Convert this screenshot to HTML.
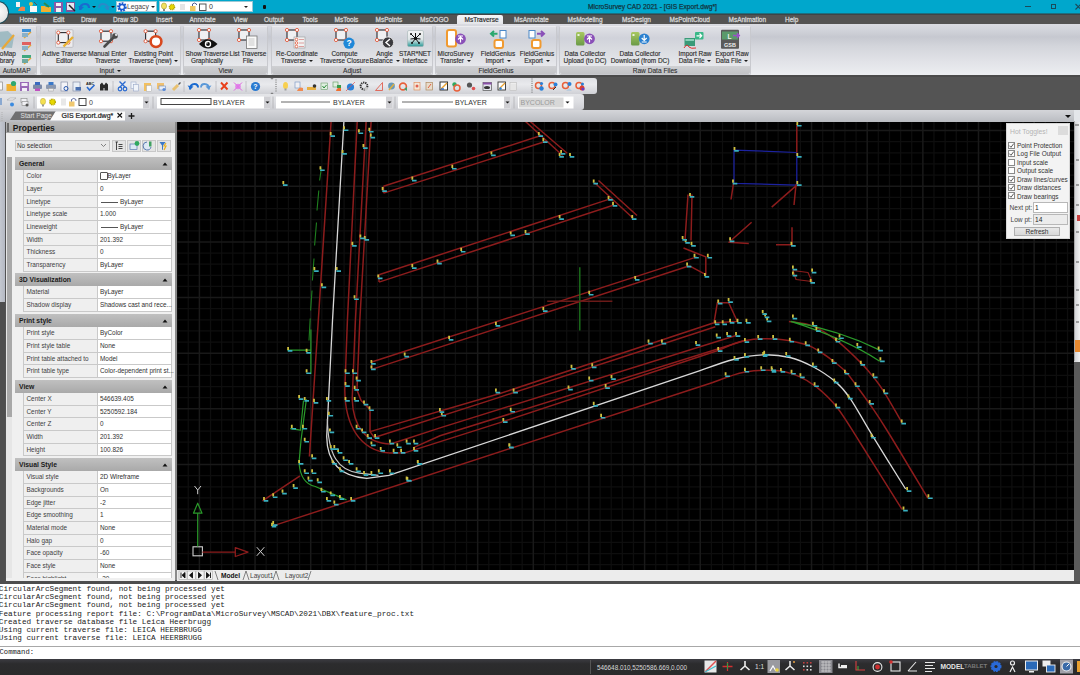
<!DOCTYPE html>
<html><head><meta charset="utf-8">
<style>
*{margin:0;padding:0;box-sizing:border-box}
html,body{width:1080px;height:675px;overflow:hidden;background:#555;font-family:"Liberation Sans",sans-serif;position:relative}
.a{position:absolute}
.t{position:absolute;white-space:nowrap}
.dd{display:inline-block;width:0;height:0;border-left:2.2px solid transparent;border-right:2.2px solid transparent;border-top:2.8px solid #1a1a1a;vertical-align:1px;margin-left:1px}

</style></head><body>
<div class="a" style="left:0;top:0;width:1080px;height:14px;background:#00a7cc"></div>
<div class="a" style="left:0;top:13px;width:1080px;height:1px;background:#1d6f80"></div>
<!-- app button -->

<!-- quick access icons -->
<svg class="a" style="left:14px;top:1px" width="105" height="12" viewBox="0 0 105 12">
 <rect x="2" y="1" width="4" height="5" fill="#f4f4f4"/><path d="M4 10 Q6 4 11 6 L11 10 Z" fill="#f0834a"/>
 <circle cx="17" cy="3" r="2" fill="#e8c040"/><rect x="16" y="5" width="7" height="6" fill="#fafafa"/><path d="M20 1 l3 3" stroke="#555" stroke-width="1"/>
 <path d="M27 5 h4 l1 1 h5 v5 h-10z" fill="#f0b030"/><path d="M30 2 l5 4" stroke="#2a8a50" stroke-width="2"/>
 <rect x="40" y="1" width="9" height="10" fill="#8a5aa8"/><rect x="42" y="2" width="5" height="3" fill="#f2f2f2"/><rect x="42" y="7" width="5" height="4" fill="#f2f2f2"/>
 <rect x="52" y="1" width="9" height="10" fill="#7a5a9a"/><rect x="53" y="2" width="7" height="7" fill="#e6e6ee"/><path d="M55 4 l6 6" stroke="#222" stroke-width="1.5"/>
 <path d="M66 9 q0 -6 5 -6 q4 0 4 4" stroke="#1a6ad0" stroke-width="2.2" fill="none"/><path d="M64 5 l3 4 l3 -3z" fill="#1a6ad0"/>
 <path d="M78 5 l2 2 l2 -2z" fill="#111"/>
 <path d="M94 9 q0 -6 -5 -6 q-4 0 -4 4" stroke="#2a8ac8" stroke-width="2" fill="none"/><path d="M96 5 l-3 4 l-3 -3z" fill="#2a8ac8"/>
 <path d="M97 5 l2 2 l2 -2z" fill="#111"/>
</svg>
<!-- Legacy combo -->
<div class="a" style="left:116px;top:1px;width:41px;height:11px;background:#fff;border:1px solid #9cc8d4"></div>
<svg class="a" style="left:117px;top:2px" width="10" height="10" viewBox="0 0 10 10"><circle cx="5" cy="5" r="3.6" fill="none" stroke="#1a5ad0" stroke-width="2.4" stroke-dasharray="1.7 1"/><circle cx="5" cy="5" r="2.6" fill="none" stroke="#1a5ad0" stroke-width="1.5"/></svg>
<div class="t" style="left:127px;top:1.5px;font-size:6.8px;line-height:10px;color:#444">Legacy</div>
<div class="a" style="left:151px;top:6px;width:0;height:0;border-left:2px solid transparent;border-right:2px solid transparent;border-top:2.5px solid #222"></div>
<!-- layer combo -->
<div class="a" style="left:159px;top:1px;width:94px;height:11px;background:#fff;border:1px solid #9cc8d4"></div>
<svg class="a" style="left:160px;top:2px" width="50" height="10" viewBox="0 0 50 10">
 <ellipse cx="4" cy="4" rx="2.6" ry="3" fill="#f2e060" stroke="#a8a030" stroke-width="0.6"/><rect x="3" y="7" width="2" height="2" fill="#888"/>
 <circle cx="12" cy="5" r="2.6" fill="#e8d800" stroke="#b0a000" stroke-width="1.4" stroke-dasharray="1 0.6"/>
 <rect x="20" y="2" width="5" height="6" fill="#e4e4e4"/>
 <rect x="30" y="4" width="5.5" height="5" fill="#f0c860"/><path d="M32.5 4 v-2 q2 -2 4 0 v1" stroke="#2a3a7a" fill="none" stroke-width="0.8"/>
 <rect x="39.5" y="2" width="6.5" height="6.5" fill="#fff" stroke="#444" stroke-width="0.9"/>
</svg>
<div class="t" style="left:209px;top:1.5px;font-size:7px;line-height:10px;color:#333">0</div>
<div class="a" style="left:244px;top:6px;width:0;height:0;border-left:2px solid transparent;border-right:2px solid transparent;border-top:2.5px solid #222"></div>
<div class="a" style="left:263px;top:5px;width:3px;height:4px;border-radius:1px;background:#111"></div>
<div class="t" style="left:588px;top:2px;font-size:6.9px;line-height:9px;color:#123642;-webkit-text-stroke:0.25px #123642;transform:scaleX(0.97);transform-origin:left">MicroSurvey CAD 2021 - [GIS Export.dwg*]</div>
<div class="a" style="left:1025px;top:6px;width:6px;height:1.2px;background:#1a4a5a"></div>
<div class="a" style="left:1051px;top:4px;width:5px;height:5px;border:1.2px solid #1a4a5a"></div>
<svg class="a" style="left:1074px;top:3px" width="6" height="8"><path d="M1.5 1 L7 6.5 M7 1 L1.5 6.5" stroke="#1a4a5a" stroke-width="1.1"/></svg>
<div class="a" style="left:0;top:14px;width:1080px;height:10px;background:#545352"></div>
<div class="a" style="left:0;top:14px;width:1080px;height:1px;background:#3e4446"></div>
<div class="a" style="left:457px;top:15px;width:46px;height:10px;background:linear-gradient(#f4f5f7,#e2e3e7);border-radius:2px 2px 0 0"></div>
<div class="a" style="left:-15px;top:0.5px;width:24px;height:23.5px;border-radius:50%;background:#1a4a58"></div>
<div class="a" style="left:-13px;top:2px;width:20.5px;height:20.5px;border-radius:50%;background:radial-gradient(circle at 55% 45%,#fbfbfb,#e6e6e6 55%,#c4c4c4)"></div>
<div style="position:absolute;left:0;top:15px;font-size:6.5px;font-weight:normal;-webkit-text-stroke:0.3px #d0d0d0;color:#d6d6d6;line-height:10px">
<span class="t" style="left:19.5px">Home</span>
<span class="t" style="left:53px">Edit</span>
<span class="t" style="left:81px">Draw</span>
<span class="t" style="left:113px">Draw 3D</span>
<span class="t" style="left:156px">Insert</span>
<span class="t" style="left:189.5px">Annotate</span>
<span class="t" style="left:233.5px">View</span>
<span class="t" style="left:264px">Output</span>
<span class="t" style="left:302.5px">Tools</span>
<span class="t" style="left:334.5px">MsTools</span>
<span class="t" style="left:375.5px">MsPoints</span>
<span class="t" style="left:420px">MsCOGO</span>
<span class="t" style="left:464.5px;color:#2a2a2a;-webkit-text-stroke:0.2px #333">MsTraverse</span>
<span class="t" style="left:514px">MsAnnotate</span>
<span class="t" style="left:567.5px">MsModeling</span>
<span class="t" style="left:622px">MsDesign</span>
<span class="t" style="left:669.5px">MsPointCloud</span>
<span class="t" style="left:728.5px">MsAnimation</span>
<span class="t" style="left:785px">Help</span>
</div>
<div class="a" style="left:0;top:24px;width:1080px;height:51px;background:linear-gradient(#dadbe1 0px,#d0d2d9 7px,#c6c8d0 13px,#d3d5db 22px,#e2e3e8 38px,#eceef1 51px)"></div>
<div class="a" style="left:0;top:75px;width:1080px;height:2px;background:#4a4a4a"></div>
<div class="a" style="left:-4px;top:25.5px;width:41.3px;height:49px;border-radius:2px;background:linear-gradient(#e0e1e6,#d0d2da 11px,#d9dbe0 22px,#e6e7eb 38px);border:1px solid #c8c9ce;border-top-color:#ececef"></div>
<div class="a" style="left:-3px;top:66px;width:39.3px;height:8px;background:linear-gradient(#cfd0d3,#c2c3c6);border-radius:0 0 2px 2px"></div>
<div class="t" style="left:-4px;width:41.3px;top:66.6px;font-size:6.6px;line-height:8px;text-align:center;color:#2a2a2a;-webkit-text-stroke:0.1px #444">AutoMAP</div>
<div class="a" style="left:39.5px;top:25.5px;width:141.5px;height:49px;border-radius:2px;background:linear-gradient(#e0e1e6,#d0d2da 11px,#d9dbe0 22px,#e6e7eb 38px);border:1px solid #c8c9ce;border-top-color:#ececef"></div>
<div class="a" style="left:40.5px;top:66px;width:139.5px;height:8px;background:linear-gradient(#cfd0d3,#c2c3c6);border-radius:0 0 2px 2px"></div>
<div class="t" style="left:39.5px;width:141.5px;top:66.6px;font-size:6.6px;line-height:8px;text-align:center;color:#2a2a2a;-webkit-text-stroke:0.1px #444">Input <i class="dd"></i></div>
<div class="a" style="left:183px;top:25.5px;width:85px;height:49px;border-radius:2px;background:linear-gradient(#e0e1e6,#d0d2da 11px,#d9dbe0 22px,#e6e7eb 38px);border:1px solid #c8c9ce;border-top-color:#ececef"></div>
<div class="a" style="left:184px;top:66px;width:83px;height:8px;background:linear-gradient(#cfd0d3,#c2c3c6);border-radius:0 0 2px 2px"></div>
<div class="t" style="left:183px;width:85px;top:66.6px;font-size:6.6px;line-height:8px;text-align:center;color:#2a2a2a;-webkit-text-stroke:0.1px #444">View</div>
<div class="a" style="left:271px;top:25.5px;width:162.3px;height:49px;border-radius:2px;background:linear-gradient(#e0e1e6,#d0d2da 11px,#d9dbe0 22px,#e6e7eb 38px);border:1px solid #c8c9ce;border-top-color:#ececef"></div>
<div class="a" style="left:272px;top:66px;width:160.3px;height:8px;background:linear-gradient(#cfd0d3,#c2c3c6);border-radius:0 0 2px 2px"></div>
<div class="t" style="left:271px;width:162.3px;top:66.6px;font-size:6.6px;line-height:8px;text-align:center;color:#2a2a2a;-webkit-text-stroke:0.1px #444">Adjust</div>
<div class="a" style="left:435px;top:25.5px;width:122px;height:49px;border-radius:2px;background:linear-gradient(#e0e1e6,#d0d2da 11px,#d9dbe0 22px,#e6e7eb 38px);border:1px solid #c8c9ce;border-top-color:#ececef"></div>
<div class="a" style="left:436px;top:66px;width:120px;height:8px;background:linear-gradient(#cfd0d3,#c2c3c6);border-radius:0 0 2px 2px"></div>
<div class="t" style="left:435px;width:122px;top:66.6px;font-size:6.6px;line-height:8px;text-align:center;color:#2a2a2a;-webkit-text-stroke:0.1px #444">FieldGenius</div>
<div class="a" style="left:559px;top:25.5px;width:192px;height:49px;border-radius:2px;background:linear-gradient(#e0e1e6,#d0d2da 11px,#d9dbe0 22px,#e6e7eb 38px);border:1px solid #c8c9ce;border-top-color:#ececef"></div>
<div class="a" style="left:560px;top:66px;width:190px;height:8px;background:linear-gradient(#cfd0d3,#c2c3c6);border-radius:0 0 2px 2px"></div>
<div class="t" style="left:559px;width:192px;top:66.6px;font-size:6.6px;line-height:8px;text-align:center;color:#2a2a2a;-webkit-text-stroke:0.1px #444">Raw Data Files</div>
<div class="t" style="left:-43px;width:100px;top:49.7px;font-size:6.45px;line-height:7.7px;text-align:center;color:#262626;-webkit-text-stroke:0.15px #444">toMap<br>brary</div>
<div class="t" style="left:14.299999999999997px;width:100px;top:49.7px;font-size:6.45px;line-height:7.7px;text-align:center;color:#262626;-webkit-text-stroke:0.15px #444">Active Traverse<br>Editor</div>
<div class="t" style="left:57.5px;width:100px;top:49.7px;font-size:6.45px;line-height:7.7px;text-align:center;color:#262626;-webkit-text-stroke:0.15px #444">Manual Enter<br>Traverse</div>
<div class="t" style="left:103.5px;width:100px;top:49.7px;font-size:6.45px;line-height:7.7px;text-align:center;color:#262626;-webkit-text-stroke:0.15px #444">Existing Point<br>Traverse (new) <i class="dd"></i></div>
<div class="t" style="left:157px;width:100px;top:49.7px;font-size:6.45px;line-height:7.7px;text-align:center;color:#262626;-webkit-text-stroke:0.15px #444">Show Traverse<br>Graphically</div>
<div class="t" style="left:198px;width:100px;top:49.7px;font-size:6.45px;line-height:7.7px;text-align:center;color:#262626;-webkit-text-stroke:0.15px #444">List Traverse<br>File</div>
<div class="t" style="left:247px;width:100px;top:49.7px;font-size:6.45px;line-height:7.7px;text-align:center;color:#262626;-webkit-text-stroke:0.15px #444">Re-Coordinate<br>Traverse <i class="dd"></i></div>
<div class="t" style="left:294.5px;width:100px;top:49.7px;font-size:6.45px;line-height:7.7px;text-align:center;color:#262626;-webkit-text-stroke:0.15px #444">Compute<br>Traverse Closure</div>
<div class="t" style="left:334.5px;width:100px;top:49.7px;font-size:6.45px;line-height:7.7px;text-align:center;color:#262626;-webkit-text-stroke:0.15px #444">Angle<br>Balance <i class="dd"></i></div>
<div class="t" style="left:365px;width:100px;top:49.7px;font-size:6.45px;line-height:7.7px;text-align:center;color:#262626;-webkit-text-stroke:0.15px #444">STAR*NET<br>Interface</div>
<div class="t" style="left:405.5px;width:100px;top:49.7px;font-size:6.45px;line-height:7.7px;text-align:center;color:#262626;-webkit-text-stroke:0.15px #444">MicroSurvey<br>Transfer <i class="dd"></i></div>
<div class="t" style="left:448px;width:100px;top:49.7px;font-size:6.45px;line-height:7.7px;text-align:center;color:#262626;-webkit-text-stroke:0.15px #444">FieldGenius<br>Import <i class="dd"></i></div>
<div class="t" style="left:487px;width:100px;top:49.7px;font-size:6.45px;line-height:7.7px;text-align:center;color:#262626;-webkit-text-stroke:0.15px #444">FieldGenius<br>Export <i class="dd"></i></div>
<div class="t" style="left:535px;width:100px;top:49.7px;font-size:6.45px;line-height:7.7px;text-align:center;color:#262626;-webkit-text-stroke:0.15px #444">Data Collector<br>Upload (to DC)</div>
<div class="t" style="left:590px;width:100px;top:49.7px;font-size:6.45px;line-height:7.7px;text-align:center;color:#262626;-webkit-text-stroke:0.15px #444">Data Collector<br>Download (from DC)</div>
<div class="t" style="left:645px;width:100px;top:49.7px;font-size:6.45px;line-height:7.7px;text-align:center;color:#262626;-webkit-text-stroke:0.15px #444">Import Raw<br>Data File <i class="dd"></i></div>
<div class="t" style="left:682px;width:100px;top:49.7px;font-size:6.45px;line-height:7.7px;text-align:center;color:#262626;-webkit-text-stroke:0.15px #444">Export Raw<br>Data File <i class="dd"></i></div><svg class="a" style="left:0;top:1px" width="1080" height="77" viewBox="0 0 1080 77">
<defs>
 <g id="trv">
  <rect x="0" y="0" width="10" height="10" fill="#f0f0f2" stroke="#2a2a30" stroke-width="1.1"/>
  <circle cx="0" cy="0" r="1.6" fill="#fff" stroke="#e0583a" stroke-width="0.9"/>
  <circle cx="10" cy="0" r="1.6" fill="#fff" stroke="#e0583a" stroke-width="0.9"/>
  <circle cx="0" cy="10" r="1.6" fill="#fff" stroke="#e0583a" stroke-width="0.9"/>
  <circle cx="10" cy="10" r="1.6" fill="#fff" stroke="#e0583a" stroke-width="0.9"/>
 </g>
</defs>
<!-- AutoMap library -->
<path d="M-2 31 L8 30 L14 36 L12 47 L-2 46 Z" fill="#9ab8c0" opacity="0.9"/>
<path d="M2 48 L14 34" stroke="#e8a838" stroke-width="2.2"/>
<rect x="22" y="28" width="9" height="3" fill="#3a90d8"/><path d="M24 37 L31 31" stroke="#e0a840" stroke-width="1.6"/><rect x="22" y="32" width="6" height="4" fill="#8ab0c8"/>
<rect x="22" y="41" width="9" height="3" fill="#e06060"/><path d="M24 50 L31 44" stroke="#e0a840" stroke-width="1.6"/><rect x="22" y="45" width="6" height="4" fill="#8ab0c8"/>
<rect x="22" y="54" width="9" height="3" fill="#40a880"/><path d="M24 63 L31 57" stroke="#e0a840" stroke-width="1.6"/><rect x="22" y="58" width="6" height="4" fill="#70a8a0"/>
<!-- Active traverse editor -->
<rect x="55.5" y="28.7" width="17.5" height="17.7" fill="#ececee" stroke="#b8b8bc" stroke-width="0.8" rx="1"/>
<use href="#trv" x="58.3" y="31.6"/>
<path d="M63.5 45.5 L73 36" stroke="#e8b030" stroke-width="2.4"/>
<!-- Manual enter -->
<use href="#trv" x="101" y="30.2"/>
<path d="M104.5 45.5 L114 36" stroke="#4a4a4a" stroke-width="2.6" stroke-linecap="round"/>
<circle cx="115" cy="35" r="2.8" fill="#4a4a4a"/><circle cx="116.2" cy="33.8" r="1.3" fill="#dcdde2"/>
<!-- existing point -->
<use href="#trv" x="145.6" y="30.2"/>
<circle cx="156" cy="40.6" r="5.4" fill="#fff" stroke="#d8481e" stroke-width="2.6"/>
<!-- show traverse graphically -->
<use href="#trv" x="199" y="29"/>
<path d="M199 43 Q208 33.5 217.5 43 Q208 52 199 43Z" fill="#111"/>
<circle cx="208" cy="43" r="3.2" fill="#fff"/><circle cx="208" cy="43" r="1.9" fill="#111"/><circle cx="207" cy="42" r="0.7" fill="#fff"/>
<!-- list traverse file -->
<use href="#trv" x="239" y="29"/>
<rect x="246.5" y="35" width="10.5" height="12.5" fill="#fafafa" stroke="#777" stroke-width="0.8"/>
<path d="M248.5 38h6M248.5 40h6M248.5 42h6M248.5 44h6" stroke="#aaa" stroke-width="0.6"/>
<!-- re-coordinate -->
<use href="#trv" x="287" y="29"/>
<rect x="294" y="36" width="11" height="11" fill="#f2f2f2" stroke="#999" stroke-width="0.6"/>
<circle cx="296.5" cy="38.5" r="1.3" fill="#fff" stroke="#e0583a" stroke-width="0.8"/><circle cx="296.5" cy="42" r="1.3" fill="#fff" stroke="#e0583a" stroke-width="0.8"/><circle cx="296.5" cy="45.5" r="1.3" fill="#fff" stroke="#e0583a" stroke-width="0.8"/>
<path d="M299 38.5h5M299 42h5M299 45.5h5" stroke="#c66" stroke-width="0.6"/>
<!-- compute closure -->
<use href="#trv" x="336" y="29"/>
<circle cx="349" cy="42.2" r="5.6" fill="#1e88d8"/><text x="349" y="45.3" font-size="8.5" font-weight="bold" fill="#fff" text-anchor="middle" font-family="Liberation Sans">?</text>
<!-- angle balance -->
<use href="#trv" x="377" y="29"/>
<circle cx="388" cy="41.5" r="5.6" fill="#3a3a3e" stroke="#eee" stroke-width="0.8"/><path d="M390 38 L386 41.5 L390 45" stroke="#fff" stroke-width="1.4" fill="none"/>
<!-- STAR*NET -->
<rect x="407.5" y="29.5" width="16" height="16" rx="1.5" fill="url(#sng)" stroke="#9aa" stroke-width="0.5"/>
<defs><linearGradient id="sng" x1="0" y1="0" x2="0" y2="1"><stop offset="0" stop-color="#f4f4f4"/><stop offset="0.55" stop-color="#e0e6e8"/><stop offset="1" stop-color="#2a9a98"/></linearGradient>
<linearGradient id="dcg" x1="0" y1="0" x2="0" y2="1"><stop offset="0" stop-color="#a8c860"/><stop offset="1" stop-color="#6a9a48"/></linearGradient></defs>
<g stroke="#111" stroke-width="1"><path d="M415.5 37.5 L411 33 M415.5 37.5 L420 33 M415.5 37.5 L410.5 38 M415.5 37.5 L420.5 38 M415.5 37.5 L412 42 M415.5 37.5 L419 42 M415.5 37.5 L415.5 32"/></g>
<circle cx="415.5" cy="37.5" r="1.6" fill="#111"/><circle cx="411" cy="33" r="1" fill="#111"/><circle cx="420" cy="33" r="1" fill="#111"/><circle cx="412" cy="42" r="1" fill="#111"/><circle cx="419" cy="42" r="1" fill="#111"/>
<!-- microsurvey transfer -->
<rect x="447" y="29" width="9" height="16.5" rx="2" fill="#fff" stroke="#f09a30" stroke-width="2"/>
<circle cx="460.5" cy="38" r="5.4" fill="#8a50b8"/><path d="M460.5 41.5 v-5 M458 38.5 l2.5 -2.5 l2.5 2.5 M458 35 h5" stroke="#fff" stroke-width="1.2" fill="none"/>
<!-- FG import -->
<path d="M497.5 32.8 h-6 M494 30 l-3 2.8 l3 2.8" stroke="#2aa870" stroke-width="2" fill="none"/>
<rect x="500" y="29.5" width="6" height="7.5" fill="#fff" stroke="#4a88c8" stroke-width="1"/>
<rect x="494.5" y="39" width="8.5" height="8" rx="2" fill="#fff" stroke="#f09a30" stroke-width="2"/>
<!-- FG export -->
<rect x="529" y="29.5" width="6" height="7.5" fill="#fff" stroke="#4a88c8" stroke-width="1"/>
<path d="M537 32.8 h7 M541 30 l3 2.8 l-3 2.8" stroke="#8a50b8" stroke-width="2" fill="none"/>
<rect x="532" y="39" width="8.5" height="8" rx="2" fill="#fff" stroke="#f09a30" stroke-width="2"/>
<!-- DC upload -->
<rect x="576" y="31" width="8.5" height="13.5" rx="1.5" fill="url(#dcg)"/><rect x="577.5" y="33" width="2" height="2" fill="#fff" opacity="0.8"/>
<circle cx="589.5" cy="37.8" r="5.4" fill="#8a50b8"/><path d="M589.5 41.5 v-5 M587 38.5 l2.5 -2.5 l2.5 2.5 M587 35 h5" stroke="#fff" stroke-width="1.2" fill="none"/>
<!-- DC download -->
<rect x="631" y="31" width="8.5" height="13.5" rx="1.5" fill="url(#dcg)"/><rect x="632.5" y="33" width="2" height="2" fill="#fff" opacity="0.8"/>
<circle cx="644.2" cy="37.8" r="5.4" fill="#2a80d0"/><path d="M644.2 34 v5 M641.7 37 l2.5 2.5 l2.5 -2.5 M641.7 41 h5" stroke="#fff" stroke-width="1.2" fill="none"/>
<!-- import raw -->
<rect x="684.5" y="37" width="10.5" height="8" fill="#3a9a78"/><rect x="685.5" y="38" width="8.5" height="2" fill="#8ad0b8"/>
<path d="M684 47 q3 -5 5 -1 q2 2 7 1" stroke="#e03030" stroke-width="1" fill="none"/>
<rect x="695" y="31" width="8.5" height="7.5" rx="1" fill="#3ab888"/><path d="M696.5 34.8 h5 M699.5 32.5 l2.2 2.3 l-2.2 2.3" stroke="#fff" stroke-width="1.2" fill="none"/>
<!-- export raw -->
<rect x="721" y="28.7" width="18" height="19" rx="1" fill="#5a5a5a"/>
<rect x="722" y="30.5" width="16" height="8" fill="#5a9a6a"/>
<text x="727.5" y="37.5" font-size="6.5" font-weight="bold" fill="#eee" font-family="Liberation Sans">L</text>
<text x="730" y="46" font-size="5.5" font-weight="bold" fill="#eee" text-anchor="middle" font-family="Liberation Sans">GSB</text>
<path d="M733 34.5 h6 M737 32.3 l2.2 2.2 l-2.2 2.2" stroke="#9a50c8" stroke-width="1.6" fill="none"/>
</svg>
<div class="a" style="left:0;top:77px;width:1080px;height:33px;background:#545454"></div>
<div class="a" style="left:-3px;top:77.7px;width:275px;height:16.4px;border-radius:0 2px 2px 0;background:linear-gradient(#dfe0e4,#e9eaed 40%,#d0d1d6)"></div>
<div class="a" style="left:271.5px;top:77.7px;width:325.5px;height:16.4px;border-radius:2px 3px 3px 2px;background:linear-gradient(#dfe0e4,#e9eaed 40%,#d0d1d6)"></div>
<div class="a" style="left:-3px;top:94.1px;width:587px;height:16px;border-radius:0 3px 3px 0;background:linear-gradient(#e4e5e8,#dcdde1 50%,#cdced3)"></div>
<!-- tab row -->
<div class="a" style="left:0;top:110px;width:1074px;height:11.5px;background:linear-gradient(#d4d5d9,#c4c6cb 60%,#b9bbc0)"></div>
<div class="a" style="left:1074px;top:110px;width:6px;height:12px;background:#e4e6ea"></div>
<div class="a" style="left:1064.5px;top:114.5px;width:0;height:0;border-left:3px solid transparent;border-right:3px solid transparent;border-top:3.5px solid #111"></div>
<svg class="a" style="left:0;top:108px" width="140" height="14" viewBox="0 108 140 14">
 <path d="M10 120 L15.5 111.6 L56 111.6 L50.5 120 Z" fill="#6f6f70"/>
 <path d="M50 120.5 L55.5 111.6 L125 111.6 L125 120.5 Z" fill="#fbfbfb"/>
 <path d="M117.5 113 l4.5 4.5 M122 113 l-4.5 4.5" stroke="#111" stroke-width="1.1"/>
 <path d="M128.5 116 h6 M131.5 113 v6" stroke="#1a1a1a" stroke-width="1.3"/>
 <path d="M2 112 v9" stroke="#aaa" stroke-width="0.8" stroke-dasharray="1 1"/>
</svg>
<div class="t" style="left:20.5px;top:111px;font-size:6.6px;line-height:10px;color:#e0e0e0">Start Page</div>
<div class="t" style="left:61.5px;top:111px;font-size:7px;line-height:10px;color:#1a1a1a;-webkit-text-stroke:0.2px #222">GIS Export.dwg*</div>
<!-- row1 icons -->
<svg class="a" style="left:0;top:77px" width="600" height="17" viewBox="0 77 600 17">
 <rect x="-1" y="82" width="3.5" height="8" fill="#f6f6f6" stroke="#777" stroke-width="0.6"/>
 <path d="M6.5 84 h4 l1 1 h4.5 v6 h-9.5z" fill="#f0b030"/><circle cx="13.5" cy="83.5" r="2.6" fill="#30a870"/>
 <rect x="20" y="82" width="9" height="9" fill="#9a6ab8"/><rect x="21.5" y="83" width="6" height="3" fill="#f2eef6"/><rect x="22" y="88" width="5" height="3" fill="#f2eef6"/>
 <rect x="33" y="84.5" width="9" height="4.5" rx="1" fill="#7a8aa8"/><rect x="35" y="82" width="5" height="3" fill="#3a6ac0"/><rect x="35" y="88.5" width="5" height="2.5" fill="#c050c0"/>
 <rect x="46" y="84.5" width="10" height="4.5" rx="1" fill="#8a98b0"/><rect x="48.5" y="82" width="5" height="3" fill="#3a78c8"/><rect x="48.5" y="88.5" width="5" height="2.5" fill="#eee" stroke="#999" stroke-width="0.5"/>
 <rect x="61" y="82" width="6.5" height="9" fill="#f4f4f8" stroke="#8890a8" stroke-width="0.7"/><circle cx="66" cy="88.5" r="2" fill="none" stroke="#2a5ab0" stroke-width="1"/>
 <rect x="73" y="82" width="7" height="9" fill="#e8eef6" stroke="#8890a8" stroke-width="0.7"/><rect x="75.5" y="87" width="5.5" height="3.5" fill="#4a70b0"/>
 <text x="86" y="85" font-size="3.8" font-weight="bold" fill="#222" font-family="Liberation Sans">ABC</text><path d="M87 87 l2.5 3 l5 -5" stroke="#2a6ad0" stroke-width="1.6" fill="none"/>
 <path d="M100 90.5 v-6 l2 -2 l1.5 2 v6z M104.5 90.5 v-6 l1.5 -2 l2 2 v6z" fill="#2a2a2a"/><rect x="103" y="85" width="2" height="3" fill="#2a2a2a"/>
 <path d="M113 81 v11" stroke="#b8b8bc" stroke-width="0.8"/>
 <path d="M119.5 81.5 l6 6 M125.5 81.5 l-6 6" stroke="#2a6ad0" stroke-width="1.3"/><circle cx="120" cy="89" r="1.8" fill="none" stroke="#2a6ad0" stroke-width="1.2"/><circle cx="125" cy="89" r="1.8" fill="none" stroke="#2a6ad0" stroke-width="1.2"/>
 <rect x="131" y="82" width="5" height="6.5" fill="#f0f4fa" stroke="#9aa8c8" stroke-width="0.6"/><rect x="133.5" y="84.5" width="5" height="6.5" fill="#f0f4fa" stroke="#9aa8c8" stroke-width="0.6"/>
 <rect x="144" y="83" width="7" height="8" fill="#f2c060"/><rect x="146.5" y="85.5" width="5" height="6" fill="#fafafa" stroke="#aaa" stroke-width="0.5"/>
 <rect x="157" y="83" width="7" height="6" fill="#f0c070"/><rect x="159" y="86" width="6.5" height="4" fill="#e8eef8" stroke="#6a8ac0" stroke-width="0.6"/><circle cx="164" cy="89.5" r="1.6" fill="#5a8ad8"/>
 <path d="M173 90 l5 -5" stroke="#e8c070" stroke-width="3"/><path d="M178.5 84.5 l2 -2" stroke="#555" stroke-width="1.2"/>
 <path d="M184 81 v11" stroke="#b8b8bc" stroke-width="0.8"/>
 <path d="M190 89.5 q0 -5.5 4.5 -5.5 q3.5 0 3.5 3.5" stroke="#1a6ad0" stroke-width="2" fill="none"/><path d="M187.5 85.5 l3 4 l3 -3z" fill="#1a6ad0"/>
 <path d="M209 89.5 q0 -5.5 -4.5 -5.5 q-3.5 0 -3.5 3.5" stroke="#5a98d8" stroke-width="1.8" fill="none"/><path d="M211.5 85.5 l-3 4 l-3 -3z" fill="#5a98d8"/>
 <path d="M216 81 v11" stroke="#b8b8bc" stroke-width="0.8"/>
 <path d="M221 82.5 l6.5 7 M227.5 82.5 l-6.5 7" stroke="#e8401a" stroke-width="1.9"/>
 <path d="M234 82.5 l8 8 M242 82.5 l-8 8" stroke="#e060e0" stroke-width="1"/><circle cx="238" cy="86.5" r="2.8" fill="#e070e8" opacity="0.8"/>
 <path d="M246 81 v11" stroke="#b8b8bc" stroke-width="0.8"/>
 <circle cx="255.5" cy="86.5" r="4.6" fill="#2a7ad0"/><text x="255.5" y="89.2" font-size="7" font-weight="bold" fill="#fff" text-anchor="middle" font-family="Liberation Sans">?</text>
 <path d="M276 79.5 v13" stroke="#666" stroke-width="1" stroke-dasharray="1 1.2"/>
 <ellipse cx="285.5" cy="85.5" rx="2.5" ry="3.5" fill="#f8d050"/><rect x="284.5" y="88.5" width="2" height="2" fill="#a0a0a0"/>
 <rect x="295" y="82" width="5" height="6" fill="#f0f0f4" stroke="#7090c0" stroke-width="0.6"/><path d="M297 91 q2 -5 6 -3 v3z" fill="#f08a50"/>
 <rect x="307" y="87" width="9" height="3" fill="#e8b040"/><circle cx="314.5" cy="86" r="1.8" fill="#333"/>
 <rect x="321" y="83" width="6.5" height="6.5" fill="#e0efe0" stroke="#6a9a6a" stroke-width="0.6"/><path d="M322.5 86 l1.5 2 l2.5 -3" stroke="#2a8a3a" stroke-width="1" fill="none"/>
 <rect x="333" y="82" width="5" height="5" fill="#e0efe0" stroke="#5a9a5a" stroke-width="0.6"/><path d="M336 91 q1 -4 5 -3 v3z" fill="#f07030"/><rect x="337" y="85" width="4" height="3" fill="#3a9a4a"/>
 <circle cx="350.5" cy="87" r="3.6" fill="#2a80d8"/><path d="M346 91 l9 -9" stroke="#e05050" stroke-width="0.7"/>
 <circle cx="364" cy="86" r="3.4" fill="none" stroke="#333" stroke-width="2" stroke-dasharray="1.3 0.8"/><circle cx="366" cy="89" r="1.8" fill="#ccc"/>
 <path d="M375.5 90.5 l7 -8 v8z" fill="none" stroke="#e06050" stroke-width="0.9"/>
 <circle cx="391.5" cy="86" r="3.4" fill="#6a9ab8"/><path d="M389 90 l5 -6" stroke="#e0b040" stroke-width="1.4"/>
 <circle cx="403" cy="86.5" r="3.4" fill="none" stroke="#e8603a" stroke-width="1.6"/><path d="M404 89 l3 2 v-4z" fill="#40a070"/>
 <rect x="414" y="82.5" width="6" height="7.5" fill="#f4e8d8" stroke="#e09060" stroke-width="0.7"/><circle cx="417" cy="86" r="1.5" fill="#e06050"/>
 <rect x="426" y="82.5" width="6.5" height="7.5" fill="#e8dccc" stroke="#b08a60" stroke-width="0.7"/><path d="M428 88 l3 -4" stroke="#e06040" stroke-width="1"/>
 <rect x="440" y="82" width="7.5" height="8" fill="#fff" stroke="#333" stroke-width="1"/><path d="M441 89 l6 -6" stroke="#e8a030" stroke-width="1.4"/><path d="M441 89 h3" stroke="#2a6ad0" stroke-width="1.4"/>
 <circle cx="454.5" cy="84.5" r="2.2" fill="#30a860"/><circle cx="457" cy="88" r="3" fill="none" stroke="#e8603a" stroke-width="1.5"/>
 <circle cx="469.5" cy="85" r="2.6" fill="#555"/><circle cx="473.5" cy="88.5" r="1.8" fill="#e05050"/>
 <rect x="483" y="82.5" width="8.5" height="8" fill="#e4e4ee" stroke="#555" stroke-width="0.7"/><rect x="483" y="82.5" width="8.5" height="2" fill="#8a50a8"/><ellipse cx="487" cy="87.5" rx="3" ry="1.6" fill="#333"/>
 <rect x="498" y="82" width="7.5" height="8" fill="#fff" stroke="#333" stroke-width="0.9"/><path d="M499 89 l6 -6" stroke="#e8a030" stroke-width="1.2"/><circle cx="500.5" cy="88.5" r="1.2" fill="#2a80d8"/>
 <rect x="510" y="82.5" width="6.5" height="8" fill="#eee" stroke="#bbb" stroke-width="0.6"/><path d="M511 85h5M511 87h5M511 89h5" stroke="#ccc" stroke-width="0.5"/>
 <path d="M532 78.5 v14.5" stroke="#666" stroke-width="1" stroke-dasharray="1 1.2"/>
 <circle cx="538.5" cy="85.5" r="3" fill="none" stroke="#e8603a" stroke-width="1.5"/><circle cx="541.5" cy="88.5" r="2.2" fill="#2a80d8"/><circle cx="541.5" cy="83.5" r="1.6" fill="#2a80d8"/>
 <circle cx="552" cy="85.5" r="3" fill="none" stroke="#e8603a" stroke-width="1.5"/><circle cx="555.5" cy="84.5" r="2" fill="#2a80d8"/><path d="M553 90 l3 -3" stroke="#333" stroke-width="1"/>
 <circle cx="565.5" cy="85.5" r="3" fill="none" stroke="#e8603a" stroke-width="1.5"/><circle cx="569.5" cy="84" r="2" fill="#2a80d8"/><path d="M566 91 h6 l-3 -3z" fill="#bcd"/>
 <circle cx="579" cy="85.5" r="3" fill="none" stroke="#e8603a" stroke-width="1.5"/><circle cx="582" cy="88" r="2.5" fill="#e04030"/><circle cx="583" cy="89" r="1.6" fill="#6a40c0"/><circle cx="582.5" cy="84" r="1.5" fill="#2a80d8"/>
</svg>
<!-- row2 -->
<svg class="a" style="left:0;top:94px" width="590" height="16" viewBox="0 94 590 16">
 <rect x="-1" y="98" width="3" height="7" fill="#8aa8d0"/>
 <path d="M7 100 l3 -2 h6 l-3 2z" fill="#f0f0f4" stroke="#999" stroke-width="0.5"/><circle cx="12" cy="104.5" r="2" fill="#3a8ae0"/>
 <rect x="21" y="98.5" width="6" height="4" fill="#f0f0f4" stroke="#888" stroke-width="0.6"/><rect x="22" y="101.5" width="6" height="4" fill="#f0f0f4" stroke="#888" stroke-width="0.6"/><circle cx="27" cy="105" r="1.5" fill="#555"/>
 <path d="M34 96.5 v12" stroke="#b0b0b4" stroke-width="0.8"/>
 <rect x="37" y="96.5" width="112.5" height="12" fill="#fff"/><rect x="143" y="96.5" width="6.5" height="12" fill="#d0d0d4"/><path d="M144.5 101.5 l2 2 l2 -2z" fill="#111"/>
 <ellipse cx="43" cy="101.5" rx="2.6" ry="3.2" fill="#f4e050" stroke="#b8a840" stroke-width="0.5"/><rect x="42" y="104.5" width="2" height="2" fill="#999"/>
 <circle cx="52.5" cy="102" r="2.8" fill="#e8d800" stroke="#b8a800" stroke-width="1.5" stroke-dasharray="1 0.6"/>
 <rect x="61" y="98.5" width="5" height="7" fill="#e8e8e8"/>
 <rect x="69" y="101.5" width="5.5" height="5" fill="#f0c870"/><path d="M71.5 101.5 v-2 q2.2 -2.2 4.4 0 v1.5" stroke="#3a4a8a" fill="none" stroke-width="0.8"/>
 <rect x="79" y="98.5" width="7" height="7" fill="#fff" stroke="#333" stroke-width="0.9"/>
 <path d="M153 96.5 v12" stroke="#b0b0b4" stroke-width="0.8"/>
 <rect x="157" y="96.5" width="113" height="12" fill="#fff"/><rect x="264" y="96.5" width="6.5" height="12" fill="#d0d0d4"/><path d="M265.5 101.5 l2 2 l2 -2z" fill="#111"/>
 <rect x="161" y="98.5" width="50" height="6" fill="#fff" stroke="#444" stroke-width="1"/>
 <path d="M273 96.5 v12" stroke="#b0b0b4" stroke-width="0.8"/>
 <rect x="276" y="96.5" width="116.5" height="12" fill="#fff"/><rect x="386" y="96.5" width="6.5" height="12" fill="#d0d0d4"/><path d="M387.5 101.5 l2 2 l2 -2z" fill="#111"/>
 <path d="M281 102 h49" stroke="#555" stroke-width="0.9"/>
 <path d="M395 96.5 v12" stroke="#b0b0b4" stroke-width="0.8"/>
 <rect x="398" y="96.5" width="112.5" height="12" fill="#fff"/><rect x="504" y="96.5" width="6.5" height="12" fill="#d0d0d4"/><path d="M505.5 101.5 l2 2 l2 -2z" fill="#111"/>
 <path d="M402 102 h51" stroke="#555" stroke-width="0.9"/>
 <path d="M514 96.5 v12" stroke="#b0b0b4" stroke-width="0.8"/>
 <rect x="518" y="96.5" width="55.5" height="12" fill="#fff"/><rect x="519" y="97.5" width="44.5" height="10" fill="#d8d8d8"/><path d="M565.5 101.5 l2 2 l2 -2z" fill="#111"/>
</svg>
<div class="t" style="left:89px;top:98px;font-size:7px;line-height:10px;color:#444">0</div>
<div class="t" style="left:213px;top:98px;font-size:7px;line-height:10px;color:#333">BYLAYER</div>
<div class="t" style="left:333px;top:98px;font-size:7px;line-height:10px;color:#333">BYLAYER</div>
<div class="t" style="left:455px;top:98px;font-size:7px;line-height:10px;color:#333">BYLAYER</div>
<div class="t" style="left:520.5px;top:98px;font-size:7px;line-height:10px;color:#9a9a9a">BYCOLOR</div>
<div class="a" style="left:0;top:121.5px;width:177px;height:462.5px;background:#525252"></div>
<div class="a" style="left:0;top:121.5px;width:5px;height:180px;background:linear-gradient(90deg,#c4c8d0,#b4b8c2)"></div>
<div class="a" style="left:6px;top:122px;width:171px;height:11px;background:linear-gradient(#b8b8b8,#a6a6a6)"></div>
<div class="a" style="left:7px;top:123px;width:2px;height:9px;background:#6a6a6a"></div>
<div class="t" style="left:12.8px;top:121.8px;font-size:8.5px;line-height:12px;font-weight:bold;color:#1a1a1a">Properties</div>
<div class="a" style="left:6px;top:133px;width:169px;height:447px;background:#f0f0f0"></div>
<div class="a" style="left:175px;top:122px;width:2px;height:458px;background:#8a8a8a"></div>
<div class="a" style="left:15px;top:140.3px;width:95px;height:11px;background:#e8e8e8;border:1px solid #c4c4c4"></div>
<div class="t" style="left:17px;top:141px;font-size:6.4px;line-height:10px;color:#333">No selection</div>
<svg class="a" style="left:100px;top:143px" width="7" height="5"><path d="M1 1 l2.5 2.5 l2.5 -2.5" stroke="#666" stroke-width="0.8" fill="none"/></svg>
<div class="a" style="left:112px;top:139.6px;width:13.5px;height:12.5px;background:#e4e4e4;border:1px solid #c8c8c8"></div>
<div class="a" style="left:127px;top:139.6px;width:13.5px;height:12.5px;background:#e4e4e4;border:1px solid #c8c8c8"></div>
<div class="a" style="left:142px;top:139.6px;width:13.5px;height:12.5px;background:#e4e4e4;border:1px solid #c8c8c8"></div>
<div class="a" style="left:157px;top:139.6px;width:13.5px;height:12.5px;background:#e4e4e4;border:1px solid #c8c8c8"></div>
<svg class="a" style="left:112px;top:139px" width="60" height="14" viewBox="112 139 60 14">
<path d="M116.5 142 v8 M115.5 142 h2.5 M118.5 144.5 h4 M118.5 146.5 h4 M118.5 148.5 h4" stroke="#333" stroke-width="0.9"/>
<rect x="130" y="144" width="7" height="5.5" fill="#dde8f4" stroke="#5a7ab0" stroke-width="0.7"/><circle cx="137" cy="143.5" r="2.4" fill="#30a860"/>
<path d="M147 142 a4 4 0 1 0 4 5" stroke="#5a7ab0" stroke-width="1" fill="#dde8f4"/><rect x="149" y="141.5" width="2.5" height="5" fill="#40a060"/>
<path d="M159.5 142 h6 l-2.5 3.5 v4 l-1 0.5 v-4.5z" fill="#3a78c8"/><path d="M166 143 l-2 3 h2 l-2 4" stroke="#e8b020" stroke-width="1.2" fill="none"/>
</svg>
<div class="a" style="left:6px;top:157px;width:6px;height:422px;background:#e6e6e6"></div>
<div class="a" style="left:6.5px;top:157px;width:5px;height:260px;background:#a8a8a8"></div>
<div class="a" style="left:0;top:301.5px;width:5px;height:282px;background:#4e4e4e"></div>
<div class="a" style="left:15px;top:157.4px;width:156.5px;height:12.8px;background:linear-gradient(#c0c0c0,#a9a9a9)"></div>
<div class="t" style="left:19px;top:158.20000000000002px;font-size:6.8px;line-height:12.8px;font-weight:bold;color:#1a1a1a">General</div>
<svg class="a" style="left:162px;top:161.9px" width="6" height="4"><path d="M0.5 3.5 L3 0.5 L5.5 3.5Z" fill="#111"/></svg>
<div class="a" style="left:23px;top:170px;width:149px;height:13px;background:#efefef;border:1px solid #c9c9c9;border-top:none"></div>
<div class="a" style="left:97px;top:170px;width:75px;height:13px;background:#fff;border:1px solid #c9c9c9;border-top:none"></div>
<div class="t" style="left:26.5px;top:170px;font-size:6.4px;line-height:12.68px;color:#404040">Color</div>
<div class="a" style="left:100px;top:172px;width:7.5px;height:8px;border:1px solid #555;background:#fff;border-radius:1px"></div>
<div class="t" style="left:107.5px;top:170px;font-size:6.4px;line-height:12.68px;color:#303030">ByLayer</div>
<div class="a" style="left:23px;top:183px;width:149px;height:13px;background:#efefef;border:1px solid #c9c9c9;border-top:none"></div>
<div class="a" style="left:97px;top:183px;width:75px;height:13px;background:#fff;border:1px solid #c9c9c9;border-top:none"></div>
<div class="t" style="left:26.5px;top:183px;font-size:6.4px;line-height:12.68px;color:#404040">Layer</div>
<div class="t" style="left:100px;top:183px;font-size:6.4px;line-height:12.68px;color:#303030">0</div>
<div class="a" style="left:23px;top:196px;width:149px;height:12px;background:#efefef;border:1px solid #c9c9c9;border-top:none"></div>
<div class="a" style="left:97px;top:196px;width:75px;height:12px;background:#fff;border:1px solid #c9c9c9;border-top:none"></div>
<div class="t" style="left:26.5px;top:196px;font-size:6.4px;line-height:12.68px;color:#404040">Linetype</div>
<div class="a" style="left:100.5px;top:202px;width:17px;height:1px;background:#555"></div>
<div class="t" style="left:120px;top:196px;font-size:6.4px;line-height:12.68px;color:#303030">ByLayer</div>
<div class="a" style="left:23px;top:208px;width:149px;height:13px;background:#efefef;border:1px solid #c9c9c9;border-top:none"></div>
<div class="a" style="left:97px;top:208px;width:75px;height:13px;background:#fff;border:1px solid #c9c9c9;border-top:none"></div>
<div class="t" style="left:26.5px;top:208px;font-size:6.4px;line-height:12.68px;color:#404040">Linetype scale</div>
<div class="t" style="left:100px;top:208px;font-size:6.4px;line-height:12.68px;color:#303030">1.000</div>
<div class="a" style="left:23px;top:221px;width:149px;height:13px;background:#efefef;border:1px solid #c9c9c9;border-top:none"></div>
<div class="a" style="left:97px;top:221px;width:75px;height:13px;background:#fff;border:1px solid #c9c9c9;border-top:none"></div>
<div class="t" style="left:26.5px;top:221px;font-size:6.4px;line-height:12.68px;color:#404040">Lineweight</div>
<div class="a" style="left:100.5px;top:227px;width:17px;height:1px;background:#555"></div>
<div class="t" style="left:120px;top:221px;font-size:6.4px;line-height:12.68px;color:#303030">ByLayer</div>
<div class="a" style="left:23px;top:234px;width:149px;height:12px;background:#efefef;border:1px solid #c9c9c9;border-top:none"></div>
<div class="a" style="left:97px;top:234px;width:75px;height:12px;background:#fff;border:1px solid #c9c9c9;border-top:none"></div>
<div class="t" style="left:26.5px;top:234px;font-size:6.4px;line-height:12.68px;color:#404040">Width</div>
<div class="t" style="left:100px;top:234px;font-size:6.4px;line-height:12.68px;color:#303030">201.392</div>
<div class="a" style="left:23px;top:246px;width:149px;height:13px;background:#efefef;border:1px solid #c9c9c9;border-top:none"></div>
<div class="a" style="left:97px;top:246px;width:75px;height:13px;background:#fff;border:1px solid #c9c9c9;border-top:none"></div>
<div class="t" style="left:26.5px;top:246px;font-size:6.4px;line-height:12.68px;color:#404040">Thickness</div>
<div class="t" style="left:100px;top:246px;font-size:6.4px;line-height:12.68px;color:#303030">0</div>
<div class="a" style="left:23px;top:259px;width:149px;height:13px;background:#efefef;border:1px solid #c9c9c9;border-top:none"></div>
<div class="a" style="left:97px;top:259px;width:75px;height:13px;background:#fff;border:1px solid #c9c9c9;border-top:none"></div>
<div class="t" style="left:26.5px;top:259px;font-size:6.4px;line-height:12.68px;color:#404040">Transparency</div>
<div class="t" style="left:100px;top:259px;font-size:6.4px;line-height:12.68px;color:#303030">ByLayer</div>
<div class="a" style="left:15px;top:273.3px;width:156.5px;height:12.8px;background:linear-gradient(#c0c0c0,#a9a9a9)"></div>
<div class="t" style="left:19px;top:274.1px;font-size:6.8px;line-height:12.8px;font-weight:bold;color:#1a1a1a">3D Visualization</div>
<svg class="a" style="left:162px;top:277.8px" width="6" height="4"><path d="M0.5 3.5 L3 0.5 L5.5 3.5Z" fill="#111"/></svg>
<div class="a" style="left:23px;top:286px;width:149px;height:13px;background:#efefef;border:1px solid #c9c9c9;border-top:none"></div>
<div class="a" style="left:97px;top:286px;width:75px;height:13px;background:#fff;border:1px solid #c9c9c9;border-top:none"></div>
<div class="t" style="left:26.5px;top:286px;font-size:6.4px;line-height:12.68px;color:#404040">Material</div>
<div class="t" style="left:100px;top:286px;font-size:6.4px;line-height:12.68px;color:#303030">ByLayer</div>
<div class="a" style="left:23px;top:299px;width:149px;height:13px;background:#efefef;border:1px solid #c9c9c9;border-top:none"></div>
<div class="a" style="left:97px;top:299px;width:75px;height:13px;background:#fff;border:1px solid #c9c9c9;border-top:none"></div>
<div class="t" style="left:26.5px;top:299px;font-size:6.4px;line-height:12.68px;color:#404040">Shadow display</div>
<div class="t" style="left:100px;top:299px;font-size:6.4px;line-height:12.68px;color:#303030">Shadows cast and rece...</div>
<div class="a" style="left:15px;top:314.2px;width:156.5px;height:12.8px;background:linear-gradient(#c0c0c0,#a9a9a9)"></div>
<div class="t" style="left:19px;top:315.0px;font-size:6.8px;line-height:12.8px;font-weight:bold;color:#1a1a1a">Print style</div>
<svg class="a" style="left:162px;top:318.7px" width="6" height="4"><path d="M0.5 3.5 L3 0.5 L5.5 3.5Z" fill="#111"/></svg>
<div class="a" style="left:23px;top:327px;width:149px;height:13px;background:#efefef;border:1px solid #c9c9c9;border-top:none"></div>
<div class="a" style="left:97px;top:327px;width:75px;height:13px;background:#fff;border:1px solid #c9c9c9;border-top:none"></div>
<div class="t" style="left:26.5px;top:327px;font-size:6.4px;line-height:12.68px;color:#404040">Print style</div>
<div class="t" style="left:100px;top:327px;font-size:6.4px;line-height:12.68px;color:#303030">ByColor</div>
<div class="a" style="left:23px;top:340px;width:149px;height:13px;background:#efefef;border:1px solid #c9c9c9;border-top:none"></div>
<div class="a" style="left:97px;top:340px;width:75px;height:13px;background:#fff;border:1px solid #c9c9c9;border-top:none"></div>
<div class="t" style="left:26.5px;top:340px;font-size:6.4px;line-height:12.68px;color:#404040">Print style table</div>
<div class="t" style="left:100px;top:340px;font-size:6.4px;line-height:12.68px;color:#303030">None</div>
<div class="a" style="left:23px;top:353px;width:149px;height:12px;background:#efefef;border:1px solid #c9c9c9;border-top:none"></div>
<div class="a" style="left:97px;top:353px;width:75px;height:12px;background:#fff;border:1px solid #c9c9c9;border-top:none"></div>
<div class="t" style="left:26.5px;top:353px;font-size:6.4px;line-height:12.68px;color:#404040">Print table attached to</div>
<div class="t" style="left:100px;top:353px;font-size:6.4px;line-height:12.68px;color:#303030">Model</div>
<div class="a" style="left:23px;top:365px;width:149px;height:13px;background:#efefef;border:1px solid #c9c9c9;border-top:none"></div>
<div class="a" style="left:97px;top:365px;width:75px;height:13px;background:#fff;border:1px solid #c9c9c9;border-top:none"></div>
<div class="t" style="left:26.5px;top:365px;font-size:6.4px;line-height:12.68px;color:#404040">Print table type</div>
<div class="t" style="left:100px;top:365px;font-size:6.4px;line-height:12.68px;color:#303030">Color-dependent print st...</div>
<div class="a" style="left:15px;top:380.1px;width:156.5px;height:12.8px;background:linear-gradient(#c0c0c0,#a9a9a9)"></div>
<div class="t" style="left:19px;top:380.90000000000003px;font-size:6.8px;line-height:12.8px;font-weight:bold;color:#1a1a1a">View</div>
<svg class="a" style="left:162px;top:384.6px" width="6" height="4"><path d="M0.5 3.5 L3 0.5 L5.5 3.5Z" fill="#111"/></svg>
<div class="a" style="left:23px;top:393px;width:149px;height:13px;background:#efefef;border:1px solid #c9c9c9;border-top:none"></div>
<div class="a" style="left:97px;top:393px;width:75px;height:13px;background:#fff;border:1px solid #c9c9c9;border-top:none"></div>
<div class="t" style="left:26.5px;top:393px;font-size:6.4px;line-height:12.68px;color:#404040">Center X</div>
<div class="t" style="left:100px;top:393px;font-size:6.4px;line-height:12.68px;color:#303030">546639.405</div>
<div class="a" style="left:23px;top:406px;width:149px;height:12px;background:#efefef;border:1px solid #c9c9c9;border-top:none"></div>
<div class="a" style="left:97px;top:406px;width:75px;height:12px;background:#fff;border:1px solid #c9c9c9;border-top:none"></div>
<div class="t" style="left:26.5px;top:406px;font-size:6.4px;line-height:12.68px;color:#404040">Center Y</div>
<div class="t" style="left:100px;top:406px;font-size:6.4px;line-height:12.68px;color:#303030">5250592.184</div>
<div class="a" style="left:23px;top:418px;width:149px;height:13px;background:#efefef;border:1px solid #c9c9c9;border-top:none"></div>
<div class="a" style="left:97px;top:418px;width:75px;height:13px;background:#fff;border:1px solid #c9c9c9;border-top:none"></div>
<div class="t" style="left:26.5px;top:418px;font-size:6.4px;line-height:12.68px;color:#404040">Center Z</div>
<div class="t" style="left:100px;top:418px;font-size:6.4px;line-height:12.68px;color:#303030">0</div>
<div class="a" style="left:23px;top:431px;width:149px;height:13px;background:#efefef;border:1px solid #c9c9c9;border-top:none"></div>
<div class="a" style="left:97px;top:431px;width:75px;height:13px;background:#fff;border:1px solid #c9c9c9;border-top:none"></div>
<div class="t" style="left:26.5px;top:431px;font-size:6.4px;line-height:12.68px;color:#404040">Width</div>
<div class="t" style="left:100px;top:431px;font-size:6.4px;line-height:12.68px;color:#303030">201.392</div>
<div class="a" style="left:23px;top:444px;width:149px;height:12px;background:#efefef;border:1px solid #c9c9c9;border-top:none"></div>
<div class="a" style="left:97px;top:444px;width:75px;height:12px;background:#fff;border:1px solid #c9c9c9;border-top:none"></div>
<div class="t" style="left:26.5px;top:444px;font-size:6.4px;line-height:12.68px;color:#404040">Height</div>
<div class="t" style="left:100px;top:444px;font-size:6.4px;line-height:12.68px;color:#303030">100.826</div>
<div class="a" style="left:15px;top:458.4px;width:156.5px;height:12.8px;background:linear-gradient(#c0c0c0,#a9a9a9)"></div>
<div class="t" style="left:19px;top:459.2px;font-size:6.8px;line-height:12.8px;font-weight:bold;color:#1a1a1a">Visual Style</div>
<svg class="a" style="left:162px;top:462.9px" width="6" height="4"><path d="M0.5 3.5 L3 0.5 L5.5 3.5Z" fill="#111"/></svg>
<div class="a" style="left:23px;top:471px;width:149px;height:13px;background:#efefef;border:1px solid #c9c9c9;border-top:none"></div>
<div class="a" style="left:97px;top:471px;width:75px;height:13px;background:#fff;border:1px solid #c9c9c9;border-top:none"></div>
<div class="t" style="left:26.5px;top:471px;font-size:6.4px;line-height:12.68px;color:#404040">Visual style</div>
<div class="t" style="left:100px;top:471px;font-size:6.4px;line-height:12.68px;color:#303030">2D Wireframe</div>
<div class="a" style="left:23px;top:484px;width:149px;height:13px;background:#efefef;border:1px solid #c9c9c9;border-top:none"></div>
<div class="a" style="left:97px;top:484px;width:75px;height:13px;background:#fff;border:1px solid #c9c9c9;border-top:none"></div>
<div class="t" style="left:26.5px;top:484px;font-size:6.4px;line-height:12.68px;color:#404040">Backgrounds</div>
<div class="t" style="left:100px;top:484px;font-size:6.4px;line-height:12.68px;color:#303030">On</div>
<div class="a" style="left:23px;top:497px;width:149px;height:12px;background:#efefef;border:1px solid #c9c9c9;border-top:none"></div>
<div class="a" style="left:97px;top:497px;width:75px;height:12px;background:#fff;border:1px solid #c9c9c9;border-top:none"></div>
<div class="t" style="left:26.5px;top:497px;font-size:6.4px;line-height:12.68px;color:#404040">Edge jitter</div>
<div class="t" style="left:100px;top:497px;font-size:6.4px;line-height:12.68px;color:#303030">-2</div>
<div class="a" style="left:23px;top:509px;width:149px;height:13px;background:#efefef;border:1px solid #c9c9c9;border-top:none"></div>
<div class="a" style="left:97px;top:509px;width:75px;height:13px;background:#fff;border:1px solid #c9c9c9;border-top:none"></div>
<div class="t" style="left:26.5px;top:509px;font-size:6.4px;line-height:12.68px;color:#404040">Edge smoothing</div>
<div class="t" style="left:100px;top:509px;font-size:6.4px;line-height:12.68px;color:#303030">1</div>
<div class="a" style="left:23px;top:522px;width:149px;height:13px;background:#efefef;border:1px solid #c9c9c9;border-top:none"></div>
<div class="a" style="left:97px;top:522px;width:75px;height:13px;background:#fff;border:1px solid #c9c9c9;border-top:none"></div>
<div class="t" style="left:26.5px;top:522px;font-size:6.4px;line-height:12.68px;color:#404040">Material mode</div>
<div class="t" style="left:100px;top:522px;font-size:6.4px;line-height:12.68px;color:#303030">None</div>
<div class="a" style="left:23px;top:535px;width:149px;height:12px;background:#efefef;border:1px solid #c9c9c9;border-top:none"></div>
<div class="a" style="left:97px;top:535px;width:75px;height:12px;background:#fff;border:1px solid #c9c9c9;border-top:none"></div>
<div class="t" style="left:26.5px;top:535px;font-size:6.4px;line-height:12.68px;color:#404040">Halo gap</div>
<div class="t" style="left:100px;top:535px;font-size:6.4px;line-height:12.68px;color:#303030">0</div>
<div class="a" style="left:23px;top:547px;width:149px;height:13px;background:#efefef;border:1px solid #c9c9c9;border-top:none"></div>
<div class="a" style="left:97px;top:547px;width:75px;height:13px;background:#fff;border:1px solid #c9c9c9;border-top:none"></div>
<div class="t" style="left:26.5px;top:547px;font-size:6.4px;line-height:12.68px;color:#404040">Face opacity</div>
<div class="t" style="left:100px;top:547px;font-size:6.4px;line-height:12.68px;color:#303030">-60</div>
<div class="a" style="left:23px;top:560px;width:149px;height:13px;background:#efefef;border:1px solid #c9c9c9;border-top:none"></div>
<div class="a" style="left:97px;top:560px;width:75px;height:13px;background:#fff;border:1px solid #c9c9c9;border-top:none"></div>
<div class="t" style="left:26.5px;top:560px;font-size:6.4px;line-height:12.68px;color:#404040">Face style</div>
<div class="t" style="left:100px;top:560px;font-size:6.4px;line-height:12.68px;color:#303030">None</div>
<div class="a" style="left:23px;top:573px;width:149px;height:13px;background:#efefef;border:1px solid #c9c9c9;border-top:none"></div>
<div class="a" style="left:97px;top:573px;width:75px;height:13px;background:#fff;border:1px solid #c9c9c9;border-top:none"></div>
<div class="t" style="left:26.5px;top:573px;font-size:6.4px;line-height:12.68px;color:#404040">Face highlight</div>
<div class="t" style="left:100px;top:573px;font-size:6.4px;line-height:12.68px;color:#303030">-30</div>
<div class="a" style="left:0;top:580.5px;width:177px;height:4px;background:#4e4e4e"></div>
<div class="a" style="left:6px;top:577.5px;width:169px;height:3px;background:#f0f0f0"></div><div class="a" style="left:177px;top:121.5px;width:897px;height:448.5px;background:#000"></div>
<svg class="a" style="left:177px;top:121.5px" width="897" height="448.5" viewBox="177 121.5 897 448.5"><path d="M177.14 121.5V570M188.27 121.5V570M210.53 121.5V570M221.66 121.5V570M232.79 121.5V570M243.92 121.5V570M266.18 121.5V570M277.31 121.5V570M288.44 121.5V570M299.57 121.5V570M321.83 121.5V570M332.96 121.5V570M344.09 121.5V570M355.22 121.5V570M377.48 121.5V570M388.61 121.5V570M399.74 121.5V570M410.87 121.5V570M433.13 121.5V570M444.26 121.5V570M455.39 121.5V570M466.52 121.5V570M488.78 121.5V570M499.91 121.5V570M511.04 121.5V570M522.17 121.5V570M544.43 121.5V570M555.56 121.5V570M566.69 121.5V570M577.82 121.5V570M600.08 121.5V570M611.21 121.5V570M622.34 121.5V570M633.47 121.5V570M655.73 121.5V570M666.86 121.5V570M677.99 121.5V570M689.12 121.5V570M711.38 121.5V570M722.51 121.5V570M733.64 121.5V570M744.77 121.5V570M767.03 121.5V570M778.16 121.5V570M789.29 121.5V570M800.42 121.5V570M822.68 121.5V570M833.81 121.5V570M844.94 121.5V570M856.07 121.5V570M878.33 121.5V570M889.46 121.5V570M900.59 121.5V570M911.72 121.5V570M933.98 121.5V570M945.11 121.5V570M956.24 121.5V570M967.37 121.5V570M989.63 121.5V570M1000.76 121.5V570M1011.89 121.5V570M1023.02 121.5V570M1045.28 121.5V570M1056.41 121.5V570M1067.54 121.5V570M177 141.23H1074M177 152.36H1074M177 163.49H1074M177 174.62H1074M177 196.88H1074M177 208.01H1074M177 219.14H1074M177 230.27H1074M177 252.53H1074M177 263.66H1074M177 274.79H1074M177 285.92H1074M177 308.18H1074M177 319.31H1074M177 330.44H1074M177 341.57H1074M177 363.83H1074M177 374.96H1074M177 386.09H1074M177 397.22H1074M177 419.48H1074M177 430.61H1074M177 441.74H1074M177 452.87H1074M177 475.13H1074M177 486.26H1074M177 497.39H1074M177 508.52H1074M177 530.78H1074M177 541.91H1074M177 553.04H1074M177 564.17H1074" stroke="#0e0e0e" stroke-width="1.25" fill="none"/><path d="M199.40 121.5V570M255.05 121.5V570M310.70 121.5V570M366.35 121.5V570M422.00 121.5V570M477.65 121.5V570M533.30 121.5V570M588.95 121.5V570M644.60 121.5V570M700.25 121.5V570M755.90 121.5V570M811.55 121.5V570M867.20 121.5V570M922.85 121.5V570M978.50 121.5V570M1034.15 121.5V570M177 130.10H1074M177 185.75H1074M177 241.40H1074M177 297.05H1074M177 352.70H1074M177 408.35H1074M177 464.00H1074M177 519.65H1074" stroke="#191919" stroke-width="1.5" fill="none"/><path d="M177 130.4 H331" stroke="#3a1616" stroke-width="1.2"/><path d="M331.1 121 L318.3 320 L309.4 456" stroke="#8c1c1c" stroke-width="1.5" fill="none" stroke-linejoin="round"/><path d="M357.2 121 L347.4 320 L344.8 389.6 C345 425 360 450 389.3 452.6 L404 452.6 L500 422.1 L718.7 349.7 C722.9 348.1 734.5 342.2 744 340.3 C753.5 338.4 765.7 337.9 776 338.5 C786.3 339.1 798.2 341.8 805.6 344 C813.0 346.2 815.8 348.7 820.4 351.5 C825.0 354.3 829.1 357.3 833.4 360.7 C837.7 364.1 842.5 367.7 846.4 371.9 C850.3 376.1 853.1 380.6 857 386 C860.9 391.4 865.0 396.7 870 404 C875.0 411.3 877.5 414.4 887.1 430 C896.8 445.6 921.1 486.5 927.9 497.8" stroke="#8c1c1c" stroke-width="1.5" fill="none" stroke-linejoin="round"/><path d="M366.1 121 L355.4 320 L352.2 398.5 C353 425 365 443 390.7 443.5 L440 427.4 L736 335" stroke="#8c1c1c" stroke-width="1.5" fill="none" stroke-linejoin="round"/><path d="M413 447.4 L440 435.2 L744 340.3" stroke="#8c1c1c" stroke-width="1.5" fill="none" stroke-linejoin="round"/><path d="M371.1 121 L359.8 320 L357 389.6 L361.1 400 L370 408.9 L370 431.1 L500 393 L714 322.3 L717.3 302.3 L728.7 302.3 L737.3 321 L714 322.3" stroke="#8c1c1c" stroke-width="1.5" fill="none" stroke-linejoin="round"/><path d="M370 431.1 L374.4 437 L500 396.6 L715.3 326.3" stroke="#8c1c1c" stroke-width="1.5" fill="none" stroke-linejoin="round"/><path d="M343.9 121 L332.5 320 L326.7 436 C327 462 340 476 366.7 477.8 L388.9 474.8 L700 370.2 C705.5 368.3 722.8 361.6 733.3 359 C743.8 356.4 753.2 354.6 762.7 354.3 C772.2 354.0 781.6 355.0 790 357 C798.4 359.0 805.5 362.3 813 366.3 C820.5 370.3 829.1 375.9 835.3 381.1 C841.5 386.4 843.9 388.9 850.1 397.8 C856.3 406.8 863.0 419.7 872.3 434.8 C881.5 449.9 900.0 479.6 905.6 488.5" stroke="#d8d8d8" stroke-width="1.3" fill="none" stroke-linejoin="round"/><path d="M327.4 418.5 C328 455 338 470 359.3 472.6 L378.5 474.8" stroke="#c8c8c8" stroke-width="1.2" fill="none" stroke-linejoin="round"/><path d="M272.9 525.4 L712 382.2 C717.3 380.4 733.3 373.7 744 371.7 C754.7 369.7 767.0 369.4 776 370 C785.0 370.6 791.4 372.8 798.2 375.6 C805.0 378.4 810.2 381.5 816.7 386.7 C823.2 391.9 829.9 397.8 837.1 407 C844.3 416.2 849.2 425.0 860 442 C870.8 459.0 895.0 497.8 902 508.9" stroke="#8c1c1c" stroke-width="1.5" fill="none" stroke-linejoin="round"/><path d="M788.9 320.9 C792.9 321.7 805.0 322.4 813 325.6 C821.0 328.9 829.1 334.2 837.1 340.4 C845.1 346.6 855.0 356.4 861.2 362.6 C867.4 368.8 870.4 372.8 874.1 377.4 C877.8 382.0 878.8 383.0 883.4 390.4 C888.0 397.8 898.8 416.6 901.9 421.9" stroke="#8c1c1c" stroke-width="1.5" fill="none" stroke-linejoin="round"/><path d="M790.7 320.9 Q840 330 879.7 349.6 M790.7 320.9 Q845 338 879.7 360.7" stroke="#2a9a2a" stroke-width="1.2" fill="none" stroke-linejoin="round"/><path d="M383.5 185.8 L541.7 134.8 M383.5 192.6 L546 140.8 M383.5 185.8 L383.5 192.6" stroke="#8c1c1c" stroke-width="1.5" fill="none" stroke-linejoin="round"/><path d="M525.5 121 L562.6 155 M530.2 121 L567.2 152.7" stroke="#8c1c1c" stroke-width="1.5" fill="none" stroke-linejoin="round"/><path d="M379 274.2 L609.4 198.6 M379 281.6 L613.9 204.5 M379 274.2 L379 281.6" stroke="#8c1c1c" stroke-width="1.5" fill="none" stroke-linejoin="round"/><path d="M594.6 182.3 L633.1 217.8 M598.5 180 L637 215" stroke="#8c1c1c" stroke-width="1.5" fill="none" stroke-linejoin="round"/><path d="M371.7 361.5 L696.9 256.4 M371.7 368.9 L689.5 265.3 M371.7 361.5 L371.7 368.9" stroke="#8c1c1c" stroke-width="1.5" fill="none" stroke-linejoin="round"/><path d="M688 194 L685 240 M692 194 L691 240 M683.5 247.5 L705.8 256.4 L705.8 274.2 L689.5 265.3" stroke="#8c1c1c" stroke-width="1.5" fill="none" stroke-linejoin="round"/><path d="M734 149.6 L796.8 152 L796.8 184.6 L734 182.8 Z" stroke="#1c22a0" stroke-width="1.25" fill="none" stroke-linejoin="round"/><path d="M796.8 124 L796.8 152 M796.8 184.6 L771.7 206.6 M751.6 221.7 L729 241.8 L748.8 243 M733.5 183 L731 199 M796 184 L794 204.5 M792 226.7 L792 244.3 L776 244.3" stroke="#8c1c1c" stroke-width="1.5" fill="none" stroke-linejoin="round"/><path d="M793 270 L808 272 L812 281 L796 279 Z" stroke="#8c1c1c" stroke-width="1.2" fill="none" stroke-linejoin="round"/><path d="M579.8 266.8 V330" stroke="#1e7a1e" stroke-width="1.3" fill="none" stroke-linejoin="round"/><path d="M547.2 300.8 H612.4" stroke="#6a1a18" stroke-width="1.5" fill="none" stroke-linejoin="round"/><path d="M321.3 168 L319.6 180 M318.8 190 L317 210 M316.5 222 L314.6 245 M314 258 L312.4 280 M312 290 L310.6 310 M310.2 318 L309 340" stroke="#1f801f" stroke-width="1.1" fill="none" stroke-linejoin="round"/><path d="M310.9 328.9 L310.9 373.4 M287.2 349.6 L310.9 349.6" stroke="#2a9a2a" stroke-width="1.2" fill="none" stroke-linejoin="round"/><path d="M306.4 398.6 L301 440 L299 462.3 C300 475 305 484 315.3 486 L346.5 499.4" stroke="#2a9a2a" stroke-width="1.2" fill="none" stroke-linejoin="round"/><path d="M303.5 400 L300.5 429.7 L290.1 428.2" stroke="#2a9a2a" stroke-width="1.2" fill="none" stroke-linejoin="round"/><path d="M262.5 500.4 L300 475.4" stroke="#8c1c1c" stroke-width="1.5" fill="none" stroke-linejoin="round"/><rect x="193" y="546.3" width="9.4" height="9" fill="none" stroke="#cfcfcf" stroke-width="1.1"/><path d="M197.7 546 V512.7" stroke="#2a9a2a" stroke-width="1.2" fill="none" stroke-linejoin="round"/><path d="M193.5 512.7 L197.7 502.7 L202 512.7 Z" stroke="#2a9a2a" stroke-width="1.2" fill="none" stroke-linejoin="round"/><path d="M202.4 551.6 H235.3" stroke="#8c1c1c" stroke-width="1.3" fill="none" stroke-linejoin="round"/><path d="M235.3 547.2 L248 551.6 L235.3 556 Z" stroke="#8c1c1c" stroke-width="1.3" fill="none" stroke-linejoin="round"/><path d="M194.5 485.5 L197.7 489.5 L201 485.5 M197.7 489.5 V493.7" stroke="#cfcfcf" stroke-width="1" fill="none"/><path d="M256.8 546.7 L264.3 555.3 M264.3 546.7 L256.8 555.3" stroke="#cfcfcf" stroke-width="1" fill="none"/><path d="M287.2 346.4h1.8v3.2h-1.8zM305.7 348.3h1.8v3.2h-1.8zM305.7 368.7h1.8v3.2h-1.8zM298.2 394.6h1.8v3.2h-1.8zM303.8 396.4h1.8v3.2h-1.8zM313.1 398.3h1.8v3.2h-1.8zM290.9 424.2h1.8v3.2h-1.8zM302.0 424.2h1.8v3.2h-1.8zM303.8 437.2h1.8v3.2h-1.8zM298.2 459.4h1.8v3.2h-1.8zM311.2 453.8h1.8v3.2h-1.8zM303.8 468.7h1.8v3.2h-1.8zM311.2 468.7h1.8v3.2h-1.8zM307.5 476.1h1.8v3.2h-1.8zM316.8 477.8h1.8v3.2h-1.8zM320.5 487.2h1.8v3.2h-1.8zM329.8 490.9h1.8v3.2h-1.8zM339.0 494.6h1.8v3.2h-1.8zM292.7 483.5h1.8v3.2h-1.8zM281.6 489.0h1.8v3.2h-1.8zM272.3 492.7h1.8v3.2h-1.8zM263.1 496.4h1.8v3.2h-1.8zM272.3 520.5h1.8v3.2h-1.8zM326.0 496.4h1.8v3.2h-1.8zM333.4 500.1h1.8v3.2h-1.8zM350.2 496.4h1.8v3.2h-1.8zM326.0 396.4h1.8v3.2h-1.8zM327.9 411.2h1.8v3.2h-1.8zM329.0 427.9h1.8v3.2h-1.8zM329.8 444.6h1.8v3.2h-1.8zM331.6 459.4h1.8v3.2h-1.8zM339.0 466.8h1.8v3.2h-1.8zM333.4 444.6h1.8v3.2h-1.8zM337.2 448.3h1.8v3.2h-1.8zM342.7 455.7h1.8v3.2h-1.8zM348.2 459.4h1.8v3.2h-1.8zM355.7 466.8h1.8v3.2h-1.8zM363.1 470.5h1.8v3.2h-1.8zM370.5 470.5h1.8v3.2h-1.8zM377.9 468.7h1.8v3.2h-1.8zM389.0 468.7h1.8v3.2h-1.8zM344.6 368.7h1.8v3.2h-1.8zM352.0 368.7h1.8v3.2h-1.8zM355.7 376.1h1.8v3.2h-1.8zM344.6 381.6h1.8v3.2h-1.8zM353.8 385.3h1.8v3.2h-1.8zM344.6 396.4h1.8v3.2h-1.8zM353.8 396.4h1.8v3.2h-1.8zM363.1 400.1h1.8v3.2h-1.8zM368.6 405.7h1.8v3.2h-1.8zM355.7 424.2h1.8v3.2h-1.8zM361.2 427.9h1.8v3.2h-1.8zM366.8 433.5h1.8v3.2h-1.8zM374.2 433.5h1.8v3.2h-1.8zM370.5 440.9h1.8v3.2h-1.8zM379.8 446.4h1.8v3.2h-1.8zM389.0 439.0h1.8v3.2h-1.8zM396.4 442.7h1.8v3.2h-1.8zM405.7 439.0h1.8v3.2h-1.8zM413.1 439.0h1.8v3.2h-1.8zM413.1 446.4h1.8v3.2h-1.8zM392.7 448.3h1.8v3.2h-1.8zM400.2 448.3h1.8v3.2h-1.8zM370.5 359.4h1.8v3.2h-1.8zM370.5 364.9h1.8v3.2h-1.8zM403.8 352.0h1.8v3.2h-1.8zM448.2 335.3h1.8v3.2h-1.8zM439.0 407.5h1.8v3.2h-1.8zM440.9 411.2h1.8v3.2h-1.8zM416.8 459.4h1.8v3.2h-1.8zM405.7 476.1h1.8v3.2h-1.8zM343.2 125.7h1.8v3.2h-1.8zM358.0 128.7h1.8v3.2h-1.8zM368.4 127.2h1.8v3.2h-1.8zM369.9 133.1h1.8v3.2h-1.8zM329.8 131.6h1.8v3.2h-1.8zM362.5 143.5h1.8v3.2h-1.8zM341.7 149.4h1.8v3.2h-1.8zM319.5 165.7h1.8v3.2h-1.8zM282.4 180.5h1.8v3.2h-1.8zM381.7 186.5h1.8v3.2h-1.8zM411.4 176.1h1.8v3.2h-1.8zM451.4 164.2h1.8v3.2h-1.8zM359.5 233.9h1.8v3.2h-1.8zM363.9 235.4h1.8v3.2h-1.8zM351.5 241.3h1.8v3.2h-1.8zM313.5 266.5h1.8v3.2h-1.8zM335.8 266.5h1.8v3.2h-1.8zM321.0 282.8h1.8v3.2h-1.8zM353.6 294.7h1.8v3.2h-1.8zM377.3 273.9h1.8v3.2h-1.8zM411.4 263.6h1.8v3.2h-1.8zM436.6 259.1h1.8v3.2h-1.8zM460.3 247.2h1.8v3.2h-1.8zM537.9 131.6h1.8v3.2h-1.8zM542.4 137.6h1.8v3.2h-1.8zM560.2 149.4h1.8v3.2h-1.8zM558.7 152.4h1.8v3.2h-1.8zM569.1 152.4h1.8v3.2h-1.8zM490.5 150.9h1.8v3.2h-1.8zM592.8 179.1h1.8v3.2h-1.8zM607.6 195.4h1.8v3.2h-1.8zM612.1 201.3h1.8v3.2h-1.8zM631.3 214.6h1.8v3.2h-1.8zM558.7 214.6h1.8v3.2h-1.8zM509.8 230.9h1.8v3.2h-1.8zM524.6 229.5h1.8v3.2h-1.8zM689.1 192.4h1.8v3.2h-1.8zM681.7 235.4h1.8v3.2h-1.8zM684.7 238.4h1.8v3.2h-1.8zM690.6 241.3h1.8v3.2h-1.8zM693.6 253.2h1.8v3.2h-1.8zM706.9 253.2h1.8v3.2h-1.8zM686.2 262.1h1.8v3.2h-1.8zM704.0 272.4h1.8v3.2h-1.8zM634.3 275.4h1.8v3.2h-1.8zM588.3 290.2h1.8v3.2h-1.8zM542.4 306.5h1.8v3.2h-1.8zM733.6 146.4h1.8v3.2h-1.8zM732.1 179.1h1.8v3.2h-1.8zM729.2 236.8h1.8v3.2h-1.8zM717.3 299.1h1.8v3.2h-1.8zM727.7 297.6h1.8v3.2h-1.8zM761.8 309.5h1.8v3.2h-1.8zM764.2 312.8h1.8v3.2h-1.8zM766.2 316.8h1.8v3.2h-1.8zM796.4 121.2h1.8v3.2h-1.8zM796.4 152.4h1.8v3.2h-1.8zM796.4 180.5h1.8v3.2h-1.8zM790.5 241.3h1.8v3.2h-1.8zM792.0 265.0h1.8v3.2h-1.8zM792.0 271.0h1.8v3.2h-1.8zM811.2 268.0h1.8v3.2h-1.8zM809.8 278.4h1.8v3.2h-1.8zM792.0 314.0h1.8v3.2h-1.8zM495.0 321.3h1.8v3.2h-1.8zM714.3 319.8h1.8v3.2h-1.8zM721.8 319.8h1.8v3.2h-1.8zM729.2 318.3h1.8v3.2h-1.8zM736.6 318.3h1.8v3.2h-1.8zM745.5 318.3h1.8v3.2h-1.8zM715.8 333.1h1.8v3.2h-1.8zM726.2 331.6h1.8v3.2h-1.8zM735.1 331.6h1.8v3.2h-1.8zM647.6 339.1h1.8v3.2h-1.8zM661.0 339.1h1.8v3.2h-1.8zM695.1 340.5h1.8v3.2h-1.8zM717.3 346.5h1.8v3.2h-1.8zM744.0 337.6h1.8v3.2h-1.8zM757.3 334.6h1.8v3.2h-1.8zM772.2 334.6h1.8v3.2h-1.8zM733.6 355.4h1.8v3.2h-1.8zM744.0 352.4h1.8v3.2h-1.8zM763.3 350.3h1.8v3.2h-1.8zM724.7 371.7h1.8v3.2h-1.8zM744.0 367.2h1.8v3.2h-1.8zM760.3 365.7h1.8v3.2h-1.8zM770.7 365.7h1.8v3.2h-1.8zM570.6 364.3h1.8v3.2h-1.8zM591.3 362.8h1.8v3.2h-1.8zM588.3 376.1h1.8v3.2h-1.8zM610.6 374.6h1.8v3.2h-1.8zM495.0 388.0h1.8v3.2h-1.8zM512.7 388.0h1.8v3.2h-1.8zM567.6 385.0h1.8v3.2h-1.8zM604.7 383.5h1.8v3.2h-1.8zM509.8 407.2h1.8v3.2h-1.8zM502.4 417.6h1.8v3.2h-1.8zM592.8 401.3h1.8v3.2h-1.8zM600.2 413.2h1.8v3.2h-1.8zM508.3 442.8h1.8v3.2h-1.8zM812.0 321.2h1.8v3.2h-1.8zM815.5 326.6h1.8v3.2h-1.8zM838.6 333.7h1.8v3.2h-1.8zM835.1 337.2h1.8v3.2h-1.8zM856.4 342.6h1.8v3.2h-1.8zM877.7 346.1h1.8v3.2h-1.8zM879.5 356.8h1.8v3.2h-1.8zM804.8 340.8h1.8v3.2h-1.8zM817.3 347.9h1.8v3.2h-1.8zM831.5 358.6h1.8v3.2h-1.8zM844.0 369.2h1.8v3.2h-1.8zM854.6 381.7h1.8v3.2h-1.8zM859.9 360.3h1.8v3.2h-1.8zM872.4 372.8h1.8v3.2h-1.8zM883.1 388.8h1.8v3.2h-1.8zM900.8 419.0h1.8v3.2h-1.8zM785.3 351.5h1.8v3.2h-1.8zM812.0 362.1h1.8v3.2h-1.8zM833.3 378.1h1.8v3.2h-1.8zM847.5 394.1h1.8v3.2h-1.8zM868.8 399.4h1.8v3.2h-1.8zM870.6 433.2h1.8v3.2h-1.8zM906.2 486.5h1.8v3.2h-1.8zM790.6 369.2h1.8v3.2h-1.8zM799.5 372.8h1.8v3.2h-1.8zM813.7 381.7h1.8v3.2h-1.8zM835.1 403.0h1.8v3.2h-1.8zM902.6 506.1h1.8v3.2h-1.8zM927.5 493.7h1.8v3.2h-1.8zM780.0 367.4h1.8v3.2h-1.8zM762.2 351.5h1.8v3.2h-1.8zM788.9 337.2h1.8v3.2h-1.8zM771.1 367.4h1.8v3.2h-1.8zM271.1 522.2h1.8v3.2h-1.8zM406.5 476.4h1.8v3.2h-1.8zM508.6 443.1h1.8v3.2h-1.8zM417.0 459.7h1.8v3.2h-1.8z" fill="#d0c040"/><path d="M287.8 349.6h4.6v1.7h-4.6zM306.3 351.5h4.6v1.7h-4.6zM306.3 371.9h4.6v1.7h-4.6zM298.8 397.8h4.6v1.7h-4.6zM304.4 399.6h4.6v1.7h-4.6zM313.7 401.5h4.6v1.7h-4.6zM291.5 427.4h4.6v1.7h-4.6zM302.6 427.4h4.6v1.7h-4.6zM304.4 440.4h4.6v1.7h-4.6zM298.8 462.6h4.6v1.7h-4.6zM311.8 457.0h4.6v1.7h-4.6zM304.4 471.9h4.6v1.7h-4.6zM311.8 471.9h4.6v1.7h-4.6zM308.1 479.3h4.6v1.7h-4.6zM317.4 481.0h4.6v1.7h-4.6zM321.1 490.4h4.6v1.7h-4.6zM330.4 494.1h4.6v1.7h-4.6zM339.6 497.8h4.6v1.7h-4.6zM293.3 486.7h4.6v1.7h-4.6zM282.2 492.2h4.6v1.7h-4.6zM272.9 495.9h4.6v1.7h-4.6zM263.7 499.6h4.6v1.7h-4.6zM272.9 523.7h4.6v1.7h-4.6zM326.6 499.6h4.6v1.7h-4.6zM334.0 503.3h4.6v1.7h-4.6zM350.8 499.6h4.6v1.7h-4.6zM326.6 399.6h4.6v1.7h-4.6zM328.5 414.4h4.6v1.7h-4.6zM329.6 431.1h4.6v1.7h-4.6zM330.4 447.8h4.6v1.7h-4.6zM332.2 462.6h4.6v1.7h-4.6zM339.6 470.0h4.6v1.7h-4.6zM334.0 447.8h4.6v1.7h-4.6zM337.8 451.5h4.6v1.7h-4.6zM343.3 458.9h4.6v1.7h-4.6zM348.8 462.6h4.6v1.7h-4.6zM356.3 470.0h4.6v1.7h-4.6zM363.7 473.7h4.6v1.7h-4.6zM371.1 473.7h4.6v1.7h-4.6zM378.5 471.9h4.6v1.7h-4.6zM389.6 471.9h4.6v1.7h-4.6zM345.2 371.9h4.6v1.7h-4.6zM352.6 371.9h4.6v1.7h-4.6zM356.3 379.3h4.6v1.7h-4.6zM345.2 384.8h4.6v1.7h-4.6zM354.4 388.5h4.6v1.7h-4.6zM345.2 399.6h4.6v1.7h-4.6zM354.4 399.6h4.6v1.7h-4.6zM363.7 403.3h4.6v1.7h-4.6zM369.2 408.9h4.6v1.7h-4.6zM356.3 427.4h4.6v1.7h-4.6zM361.8 431.1h4.6v1.7h-4.6zM367.4 436.7h4.6v1.7h-4.6zM374.8 436.7h4.6v1.7h-4.6zM371.1 444.1h4.6v1.7h-4.6zM380.4 449.6h4.6v1.7h-4.6zM389.6 442.2h4.6v1.7h-4.6zM397.0 445.9h4.6v1.7h-4.6zM406.3 442.2h4.6v1.7h-4.6zM413.7 442.2h4.6v1.7h-4.6zM413.7 449.6h4.6v1.7h-4.6zM393.3 451.5h4.6v1.7h-4.6zM400.8 451.5h4.6v1.7h-4.6zM371.1 362.6h4.6v1.7h-4.6zM371.1 368.1h4.6v1.7h-4.6zM404.4 355.2h4.6v1.7h-4.6zM448.8 338.5h4.6v1.7h-4.6zM439.6 410.7h4.6v1.7h-4.6zM441.5 414.4h4.6v1.7h-4.6zM417.4 462.6h4.6v1.7h-4.6zM406.3 479.3h4.6v1.7h-4.6zM343.8 128.9h4.6v1.7h-4.6zM358.6 131.9h4.6v1.7h-4.6zM369.0 130.4h4.6v1.7h-4.6zM370.5 136.3h4.6v1.7h-4.6zM330.4 134.8h4.6v1.7h-4.6zM363.1 146.7h4.6v1.7h-4.6zM342.3 152.6h4.6v1.7h-4.6zM320.1 168.9h4.6v1.7h-4.6zM283.0 183.7h4.6v1.7h-4.6zM382.3 189.7h4.6v1.7h-4.6zM412.0 179.3h4.6v1.7h-4.6zM452.0 167.4h4.6v1.7h-4.6zM360.1 237.1h4.6v1.7h-4.6zM364.5 238.6h4.6v1.7h-4.6zM352.1 244.5h4.6v1.7h-4.6zM314.1 269.7h4.6v1.7h-4.6zM336.4 269.7h4.6v1.7h-4.6zM321.6 286.0h4.6v1.7h-4.6zM354.2 297.9h4.6v1.7h-4.6zM377.9 277.1h4.6v1.7h-4.6zM412.0 266.8h4.6v1.7h-4.6zM437.2 262.3h4.6v1.7h-4.6zM460.9 250.4h4.6v1.7h-4.6zM538.5 134.8h4.6v1.7h-4.6zM543.0 140.8h4.6v1.7h-4.6zM560.8 152.6h4.6v1.7h-4.6zM559.3 155.6h4.6v1.7h-4.6zM569.7 155.6h4.6v1.7h-4.6zM491.1 154.1h4.6v1.7h-4.6zM593.4 182.3h4.6v1.7h-4.6zM608.2 198.6h4.6v1.7h-4.6zM612.7 204.5h4.6v1.7h-4.6zM631.9 217.8h4.6v1.7h-4.6zM559.3 217.8h4.6v1.7h-4.6zM510.4 234.1h4.6v1.7h-4.6zM525.2 232.7h4.6v1.7h-4.6zM689.7 195.6h4.6v1.7h-4.6zM682.3 238.6h4.6v1.7h-4.6zM685.3 241.6h4.6v1.7h-4.6zM691.2 244.5h4.6v1.7h-4.6zM694.2 256.4h4.6v1.7h-4.6zM707.5 256.4h4.6v1.7h-4.6zM686.8 265.3h4.6v1.7h-4.6zM704.6 275.6h4.6v1.7h-4.6zM634.9 278.6h4.6v1.7h-4.6zM588.9 293.4h4.6v1.7h-4.6zM543.0 309.7h4.6v1.7h-4.6zM734.2 149.6h4.6v1.7h-4.6zM732.7 182.3h4.6v1.7h-4.6zM729.8 240.0h4.6v1.7h-4.6zM717.9 302.3h4.6v1.7h-4.6zM728.3 300.8h4.6v1.7h-4.6zM762.4 312.7h4.6v1.7h-4.6zM764.8 316.0h4.6v1.7h-4.6zM766.8 320.0h4.6v1.7h-4.6zM797.0 124.4h4.6v1.7h-4.6zM797.0 155.6h4.6v1.7h-4.6zM797.0 183.7h4.6v1.7h-4.6zM791.1 244.5h4.6v1.7h-4.6zM792.6 268.2h4.6v1.7h-4.6zM792.6 274.2h4.6v1.7h-4.6zM811.8 271.2h4.6v1.7h-4.6zM810.4 281.6h4.6v1.7h-4.6zM792.6 317.2h4.6v1.7h-4.6zM495.6 324.5h4.6v1.7h-4.6zM714.9 323.0h4.6v1.7h-4.6zM722.4 323.0h4.6v1.7h-4.6zM729.8 321.5h4.6v1.7h-4.6zM737.2 321.5h4.6v1.7h-4.6zM746.1 321.5h4.6v1.7h-4.6zM716.4 336.3h4.6v1.7h-4.6zM726.8 334.8h4.6v1.7h-4.6zM735.7 334.8h4.6v1.7h-4.6zM648.2 342.3h4.6v1.7h-4.6zM661.6 342.3h4.6v1.7h-4.6zM695.7 343.7h4.6v1.7h-4.6zM717.9 349.7h4.6v1.7h-4.6zM744.6 340.8h4.6v1.7h-4.6zM757.9 337.8h4.6v1.7h-4.6zM772.8 337.8h4.6v1.7h-4.6zM734.2 358.6h4.6v1.7h-4.6zM744.6 355.6h4.6v1.7h-4.6zM763.9 353.5h4.6v1.7h-4.6zM725.3 374.9h4.6v1.7h-4.6zM744.6 370.4h4.6v1.7h-4.6zM760.9 368.9h4.6v1.7h-4.6zM771.3 368.9h4.6v1.7h-4.6zM571.2 367.5h4.6v1.7h-4.6zM591.9 366.0h4.6v1.7h-4.6zM588.9 379.3h4.6v1.7h-4.6zM611.2 377.8h4.6v1.7h-4.6zM495.6 391.2h4.6v1.7h-4.6zM513.3 391.2h4.6v1.7h-4.6zM568.2 388.2h4.6v1.7h-4.6zM605.3 386.7h4.6v1.7h-4.6zM510.4 410.4h4.6v1.7h-4.6zM503.0 420.8h4.6v1.7h-4.6zM593.4 404.5h4.6v1.7h-4.6zM600.8 416.4h4.6v1.7h-4.6zM508.9 446.0h4.6v1.7h-4.6zM812.6 324.4h4.6v1.7h-4.6zM816.1 329.8h4.6v1.7h-4.6zM839.2 336.9h4.6v1.7h-4.6zM835.7 340.4h4.6v1.7h-4.6zM857.0 345.8h4.6v1.7h-4.6zM878.3 349.3h4.6v1.7h-4.6zM880.1 360.0h4.6v1.7h-4.6zM805.4 344.0h4.6v1.7h-4.6zM817.9 351.1h4.6v1.7h-4.6zM832.1 361.8h4.6v1.7h-4.6zM844.6 372.4h4.6v1.7h-4.6zM855.2 384.9h4.6v1.7h-4.6zM860.5 363.5h4.6v1.7h-4.6zM873.0 376.0h4.6v1.7h-4.6zM883.7 392.0h4.6v1.7h-4.6zM901.4 422.2h4.6v1.7h-4.6zM785.9 354.7h4.6v1.7h-4.6zM812.6 365.3h4.6v1.7h-4.6zM833.9 381.3h4.6v1.7h-4.6zM848.1 397.3h4.6v1.7h-4.6zM869.4 402.6h4.6v1.7h-4.6zM871.2 436.4h4.6v1.7h-4.6zM906.8 489.7h4.6v1.7h-4.6zM791.2 372.4h4.6v1.7h-4.6zM800.1 376.0h4.6v1.7h-4.6zM814.3 384.9h4.6v1.7h-4.6zM835.7 406.2h4.6v1.7h-4.6zM903.2 509.3h4.6v1.7h-4.6zM928.1 496.9h4.6v1.7h-4.6zM780.6 370.6h4.6v1.7h-4.6zM762.8 354.7h4.6v1.7h-4.6zM789.5 340.4h4.6v1.7h-4.6zM771.7 370.6h4.6v1.7h-4.6zM271.7 525.4h4.6v1.7h-4.6zM407.1 479.6h4.6v1.7h-4.6zM509.2 446.3h4.6v1.7h-4.6zM417.6 462.9h4.6v1.7h-4.6z" fill="#38b0c0"/></svg>
<div class="a" style="left:1006px;top:123px;width:64px;height:115.5px;background:#f3f3f3;border:1px solid #d8d8d8"></div>
<div class="t" style="left:1010px;top:126.5px;font-size:6.8px;line-height:9px;color:#b4b4b4">Hot Toggles!</div>
<div class="a" style="left:1058px;top:125.5px;width:9.5px;height:9.5px;background:#dcdcdc"></div>
<div class="a" style="left:1008px;top:141.70000000000002px;width:7px;height:7px;background:#fff;border:1px solid #8a8a8a"></div>
<svg class="a" style="left:1008px;top:141.70000000000002px" width="7" height="7"><path d="M1.3 3.6 L3 5.3 L5.8 1.5" stroke="#444" stroke-width="0.9" fill="none"/></svg>
<div class="t" style="left:1017px;top:140.8px;font-size:6.45px;line-height:9px;color:#333">Point Protection</div>
<div class="a" style="left:1008px;top:150.1px;width:7px;height:7px;background:#fff;border:1px solid #8a8a8a"></div>
<svg class="a" style="left:1008px;top:150.1px" width="7" height="7"><path d="M1.3 3.6 L3 5.3 L5.8 1.5" stroke="#444" stroke-width="0.9" fill="none"/></svg>
<div class="t" style="left:1017px;top:149.2px;font-size:6.45px;line-height:9px;color:#333">Log File Output</div>
<div class="a" style="left:1008px;top:158.6px;width:7px;height:7px;background:#fff;border:1px solid #8a8a8a"></div>
<div class="t" style="left:1017px;top:157.7px;font-size:6.45px;line-height:9px;color:#333">Input scale</div>
<div class="a" style="left:1008px;top:167.0px;width:7px;height:7px;background:#fff;border:1px solid #8a8a8a"></div>
<div class="t" style="left:1017px;top:166.1px;font-size:6.45px;line-height:9px;color:#333">Output scale</div>
<div class="a" style="left:1008px;top:175.5px;width:7px;height:7px;background:#fff;border:1px solid #8a8a8a"></div>
<svg class="a" style="left:1008px;top:175.5px" width="7" height="7"><path d="M1.3 3.6 L3 5.3 L5.8 1.5" stroke="#444" stroke-width="0.9" fill="none"/></svg>
<div class="t" style="left:1017px;top:174.6px;font-size:6.45px;line-height:9px;color:#333">Draw lines/curves</div>
<div class="a" style="left:1008px;top:183.9px;width:7px;height:7px;background:#fff;border:1px solid #8a8a8a"></div>
<svg class="a" style="left:1008px;top:183.9px" width="7" height="7"><path d="M1.3 3.6 L3 5.3 L5.8 1.5" stroke="#444" stroke-width="0.9" fill="none"/></svg>
<div class="t" style="left:1017px;top:183.0px;font-size:6.45px;line-height:9px;color:#333">Draw distances</div>
<div class="a" style="left:1008px;top:192.4px;width:7px;height:7px;background:#fff;border:1px solid #8a8a8a"></div>
<svg class="a" style="left:1008px;top:192.4px" width="7" height="7"><path d="M1.3 3.6 L3 5.3 L5.8 1.5" stroke="#444" stroke-width="0.9" fill="none"/></svg>
<div class="t" style="left:1017px;top:191.5px;font-size:6.45px;line-height:9px;color:#333">Draw bearings</div>
<div class="t" style="left:1009.5px;top:202.5px;font-size:6.6px;line-height:9px;color:#444">Next pt:</div>
<div class="a" style="left:1033px;top:202px;width:35px;height:10.5px;background:#fff;border:1px solid #b8b8b8"></div>
<div class="t" style="left:1035px;top:202.5px;font-size:6.6px;line-height:9px;color:#222">1</div>
<div class="t" style="left:1010.5px;top:214.5px;font-size:6.6px;line-height:9px;color:#444">Low pt:</div>
<div class="a" style="left:1033px;top:214px;width:35px;height:10.5px;background:#ececec;border:1px solid #b8b8b8"></div>
<div class="t" style="left:1035px;top:214.5px;font-size:6.6px;line-height:9px;color:#222">14</div>
<div class="a" style="left:1014px;top:227px;width:46px;height:8.5px;background:linear-gradient(#e8e8e8,#d8d8d8);border:1px solid #b0b0b0"></div>
<div class="t" style="left:1014px;width:46px;text-align:center;top:226.5px;font-size:6.6px;line-height:9px;color:#333">Refresh</div>
<div class="a" style="left:1074px;top:121.5px;width:6px;height:240px;background:linear-gradient(90deg,#cfd0d4,#f2f2f2)"></div>
<div class="a" style="left:1074px;top:361.5px;width:6px;height:222px;background:#5a5a5a"></div>
<svg class="a" style="left:1074px;top:121px" width="6" height="240" viewBox="1074 121 6 240"><path d="M1075 125 l4 0 M1076 160h3 M1076 185h3 M1076 205h3 M1076 232h3 M1076 262h3 M1076 290h3 M1076 305h3 M1076 322h3" stroke="#555" stroke-width="1"/><rect x="1077" y="215" width="3" height="6" fill="#c84040"/><rect x="1075" y="340" width="5" height="12" fill="#e88a30"/><path d="M1074.5 121 V361" stroke="#aaa" stroke-width="1"/></svg>
<div class="a" style="left:177px;top:570px;width:897px;height:10.5px;background:#ececec"></div>
<svg class="a" style="left:177px;top:570px" width="150" height="11" viewBox="177 570 150 11">
<rect x="179" y="571" width="8" height="8.5" fill="#f4f4f4" stroke="#aaa" stroke-width="0.6"/><rect x="187.5" y="571" width="8" height="8.5" fill="#f4f4f4" stroke="#aaa" stroke-width="0.6"/>
<rect x="196" y="571" width="8" height="8.5" fill="#f4f4f4" stroke="#aaa" stroke-width="0.6"/><rect x="204.5" y="571" width="8" height="8.5" fill="#f4f4f4" stroke="#aaa" stroke-width="0.6"/>
<path d="M181 572.5v5.5 M185 572.5 l-3 2.75 l3 2.75z M192.5 572.5 l-3 2.75 l3 2.75z M198.5 572.5 l3 2.75 l-3 2.75z M206.5 572.5 l3 2.75 l-3 2.75z M210.5 572.5v5.5" stroke="#111" stroke-width="0.9" fill="#111"/>
<path d="M215 571 l3 9 M243 580 l3 -9 l3 9 M273 580 l3 -9 l3 9 M308 580 l3 -9" stroke="#555" stroke-width="0.7" fill="none"/>
</svg>
<div class="t" style="left:221px;top:570.5px;font-size:6.6px;line-height:9.5px;color:#111;font-weight:bold">Model</div>
<div class="t" style="left:250px;top:570.5px;font-size:6.6px;line-height:9.5px;color:#444">Layout1</div>
<div class="t" style="left:285px;top:570.5px;font-size:6.6px;line-height:9.5px;color:#444">Layout2</div>
<div class="a" style="left:177px;top:580.5px;width:903px;height:3.5px;background:#4e4e4e"></div><div class="a" style="left:0;top:584px;width:1080px;height:74.5px;background:#fff"></div>
<div class="a" style="left:0;top:645.5px;width:1080px;height:1px;background:#a8a8a8"></div>
<div class="t" style="left:-1.2px;top:585.4px;font-family:'Liberation Mono',monospace;font-size:7.7px;line-height:8.05px;color:#1a1a1a;white-space:pre">CircularArcSegment found, not being processed yet
CircularArcSegment found, not being processed yet
CircularArcSegment found, not being processed yet
Feature processing report file: C:\ProgramData\MicroSurvey\MSCAD\2021\DBX\feature_proc.txt
Created traverse database file Leica Heerbrugg
Using current traverse file: LEICA HEERBRUGG
Using current traverse file: LEICA HEERBRUGG</div>
<div class="t" style="left:-0.5px;top:647.5px;font-family:'Liberation Mono',monospace;font-size:7.2px;line-height:8px;color:#1a1a1a">Command:</div>
<div class="a" style="left:0;top:658.5px;width:1080px;height:16.5px;background:linear-gradient(#3c3c42,#2c2c2e 30%,#2a2a2a)"></div>
<div class="a" style="left:589.5px;top:660px;width:1px;height:14px;background:#555"></div>
<div class="t" style="left:597px;top:662.5px;font-size:6.35px;line-height:9px;color:#d8d8d8">546648.010,5250586.669,0.000</div>
<svg class="a" style="left:700px;top:658px" width="380" height="17" viewBox="700 658 380 17">
 <rect x="704.5" y="660.5" width="12" height="12" fill="#e8e8e8"/><path d="M705 672 L716 661" stroke="#e05050" stroke-width="1.5"/><path d="M705 672 L716 666" stroke="#40c0d0" stroke-width="1.2"/>
 <path d="M722.5 666.5 h10 M727.5 662 v9" stroke="#d03030" stroke-width="1.3"/><path d="M727.5 663 v6" stroke="#30a040" stroke-width="1"/>
 <path d="M745 666 v-5 M745 666 l-4.5 4 M745 666 l4.5 4" stroke="#eee" stroke-width="1.6"/>
 <rect x="767.5" y="660" width="12.5" height="13" fill="#9a9aa0"/><path d="M770 671 l3 -5 l3 5" stroke="#fff" stroke-width="1.2" fill="none"/><circle cx="777" cy="670" r="1.8" fill="#e8d040"/>
 <path d="M790 666 v-5 M790 666 l-4.5 4 M790 666 l4.5 4" stroke="#eee" stroke-width="1.5"/><circle cx="794" cy="662" r="1" fill="#e8a040"/>
 <g fill="#c04040"><rect x="803" y="662" width="1.6" height="1.6"/><rect x="806.5" y="662" width="1.6" height="1.6"/><rect x="810" y="662" width="1.6" height="1.6"/><rect x="803" y="665.5" width="1.6" height="1.6" fill="#ddd"/><rect x="806.5" y="665.5" width="1.6" height="1.6" fill="#ddd"/><rect x="810" y="665.5" width="1.6" height="1.6" fill="#ddd"/><rect x="803" y="669" width="1.6" height="1.6"/><rect x="806.5" y="669" width="1.6" height="1.6" fill="#ddd"/><rect x="810" y="669" width="1.6" height="1.6" fill="#ddd"/></g>
 <rect x="819" y="660" width="13.5" height="13" fill="#8a8a90"/><path d="M821 662h10M821 665h10M821 668h10M821 671h10M823 661v11M826 661v11M829 661v11" stroke="#ddd" stroke-width="0.6"/>
 <path d="M839 663.5 v4 h8" stroke="#eee" stroke-width="1.5" fill="none"/><rect x="841" y="665" width="6" height="2" fill="#eee"/>
 <path d="M856 661 v9 h9" stroke="#d84040" stroke-width="1.1" fill="none"/><path d="M858 670 v-4" stroke="#40b040" stroke-width="1"/>
 <circle cx="877.5" cy="667" r="4.4" fill="none" stroke="#e8e8e8" stroke-width="1.1"/><circle cx="877.5" cy="667" r="2.4" fill="#d03030"/>
 <rect x="891" y="662" width="9" height="9" fill="none" stroke="#e8e8e8" stroke-width="1.1"/><circle cx="891" cy="662" r="1.8" fill="#d03030"/>
 <path d="M908 671 L916 662 M908 671 h9" stroke="#e8e8e8" stroke-width="1.1" fill="none"/>
 <path d="M925 662.5 h10 M925 665.5 h8 M925 668.5 h10 M925 671.5 h7" stroke="#e8e8e8" stroke-width="1.2"/>
 <circle cx="996" cy="666.5" r="4.8" fill="#2a6ad8" stroke="#2a6ad8" stroke-width="1.4" stroke-dasharray="1.8 1"/><circle cx="996" cy="666.5" r="1.6" fill="#2a2a2a"/>
 <circle cx="1012.5" cy="663" r="2" fill="none" stroke="#eee" stroke-width="1.2"/><path d="M1010 672 l2.5 -5 l2.5 5" stroke="#eee" stroke-width="1.2" fill="none"/>
 <rect x="1025.5" y="661" width="12" height="9" fill="#2a6ab8" stroke="#eee" stroke-width="1"/><rect x="1029" y="671" width="5" height="1.5" fill="#eee"/>
 <rect x="1042.5" y="660.5" width="8" height="6" fill="#eee"/><rect x="1046.5" y="665" width="8.5" height="7" fill="#2a6ab8" stroke="#eee" stroke-width="0.9"/>
 <rect x="1060" y="659.5" width="13" height="14" fill="#a0a0a8"/><circle cx="1066.5" cy="666.5" r="4.5" fill="#3a6aa8" stroke="#eee" stroke-width="1.2"/><path d="M1066.5 666.5 l2.5 -2.5" stroke="#fff" stroke-width="1"/>
 <rect x="1077" y="661" width="5" height="11" fill="#e8a030"/>
</svg>
<div class="t" style="left:940.5px;top:662px;font-size:6.6px;line-height:9px;color:#e6e6e6;font-weight:bold">MODEL</div>
<div class="t" style="left:964px;top:662px;font-size:6px;line-height:9px;color:#7a7a7a;font-weight:bold">TABLET</div>
<div class="t" style="left:755px;top:662px;font-size:6.6px;line-height:9px;color:#dcdcdc">1:1</div>

</body></html>
